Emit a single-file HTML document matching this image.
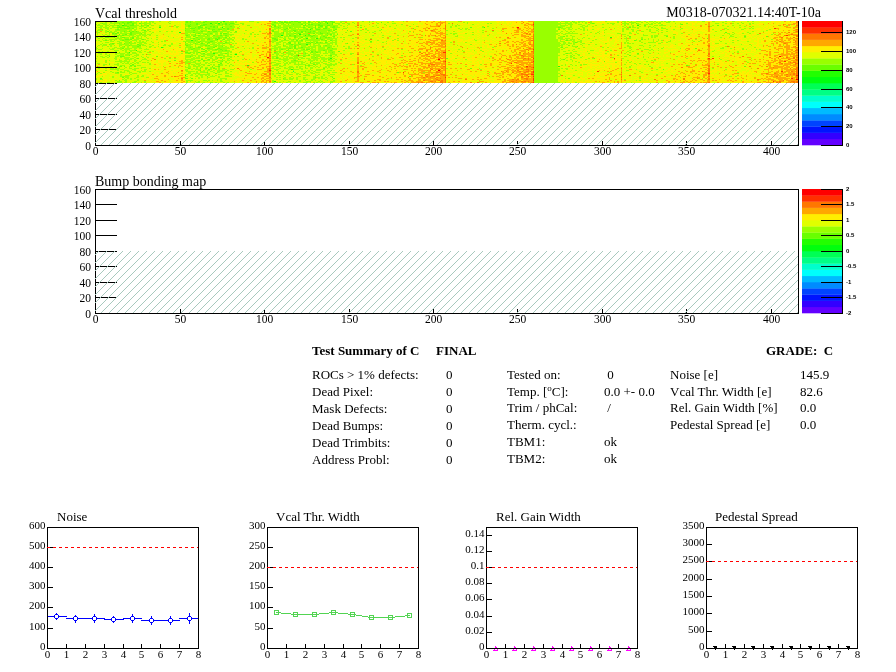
<!DOCTYPE html><html><head><meta charset="utf-8"><style>html,body{margin:0;padding:0;background:#fff;}body{width:896px;height:672px;overflow:hidden;position:relative;}svg{position:absolute;left:0;top:0;will-change:transform;}text{font-family:"Liberation Serif",serif;fill:#000;}.s{font-family:"Liberation Sans",sans-serif;}</style></head><body>
<svg width="896" height="672" viewBox="0 0 896 672" style="z-index:0">
<rect x="95" y="21" width="3" height="21" fill="#ccfb00"/>
<rect x="98" y="21" width="3" height="21" fill="#c0fc00"/>
<rect x="101" y="21" width="3" height="21" fill="#c3fb00"/>
<rect x="104" y="21" width="3" height="21" fill="#b0fe00"/>
<rect x="107" y="21" width="3" height="21" fill="#bcfe00"/>
<rect x="110" y="21" width="3" height="21" fill="#b7fe00"/>
<rect x="113" y="21" width="3" height="21" fill="#b2ff00"/>
<rect x="116" y="21" width="3" height="21" fill="#a5fe00"/>
<rect x="119" y="21" width="3" height="21" fill="#a1ff00"/>
<rect x="122" y="21" width="3" height="21" fill="#97ff00"/>
<rect x="125" y="21" width="3" height="21" fill="#98ff00"/>
<rect x="128" y="21" width="3" height="21" fill="#98ff00"/>
<rect x="131" y="21" width="3" height="21" fill="#95fe00"/>
<rect x="134" y="21" width="3" height="21" fill="#acfe00"/>
<rect x="137" y="21" width="3" height="21" fill="#bdff00"/>
<rect x="140" y="21" width="3" height="21" fill="#b6ff00"/>
<rect x="143" y="21" width="3" height="21" fill="#b4ff00"/>
<rect x="146" y="21" width="3" height="21" fill="#c0fe00"/>
<rect x="149" y="21" width="3" height="21" fill="#cafd00"/>
<rect x="152" y="21" width="3" height="21" fill="#dcfa00"/>
<rect x="155" y="21" width="3" height="21" fill="#dffb00"/>
<rect x="158" y="21" width="3" height="21" fill="#d7fb00"/>
<rect x="161" y="21" width="3" height="21" fill="#e6f900"/>
<rect x="164" y="21" width="3" height="21" fill="#e3f900"/>
<rect x="167" y="21" width="3" height="21" fill="#e0fa00"/>
<rect x="170" y="21" width="3" height="21" fill="#e6f600"/>
<rect x="173" y="21" width="3" height="21" fill="#e6f900"/>
<rect x="176" y="21" width="3" height="21" fill="#e3fa00"/>
<rect x="179" y="21" width="3" height="21" fill="#e9f300"/>
<rect x="182" y="21" width="3" height="21" fill="#eff000"/>
<rect x="185" y="21" width="3" height="21" fill="#99ff00"/>
<rect x="188" y="21" width="3" height="21" fill="#9cff00"/>
<rect x="191" y="21" width="3" height="21" fill="#9cff00"/>
<rect x="194" y="21" width="3" height="21" fill="#95ff00"/>
<rect x="197" y="21" width="3" height="21" fill="#99ff00"/>
<rect x="200" y="21" width="3" height="21" fill="#9aff00"/>
<rect x="203" y="21" width="3" height="21" fill="#a1ff00"/>
<rect x="206" y="21" width="3" height="21" fill="#9aff00"/>
<rect x="209" y="21" width="3" height="21" fill="#96ff00"/>
<rect x="212" y="21" width="3" height="21" fill="#98ff00"/>
<rect x="215" y="21" width="3" height="21" fill="#95fe00"/>
<rect x="218" y="21" width="3" height="21" fill="#a5fd00"/>
<rect x="221" y="21" width="3" height="21" fill="#9ffd00"/>
<rect x="224" y="21" width="3" height="21" fill="#97ff00"/>
<rect x="227" y="21" width="3" height="21" fill="#a2ff00"/>
<rect x="230" y="21" width="3" height="21" fill="#adfd00"/>
<rect x="233" y="21" width="3" height="21" fill="#c7fb00"/>
<rect x="236" y="21" width="3" height="21" fill="#dcf900"/>
<rect x="239" y="21" width="3" height="21" fill="#e2fb00"/>
<rect x="242" y="21" width="3" height="21" fill="#defa00"/>
<rect x="245" y="21" width="3" height="21" fill="#e4f800"/>
<rect x="248" y="21" width="3" height="21" fill="#defa00"/>
<rect x="251" y="21" width="3" height="21" fill="#e2f800"/>
<rect x="254" y="21" width="3" height="21" fill="#e4fa00"/>
<rect x="257" y="21" width="3" height="21" fill="#e6f900"/>
<rect x="260" y="21" width="3" height="21" fill="#f1f300"/>
<rect x="263" y="21" width="3" height="21" fill="#f7e800"/>
<rect x="266" y="21" width="3" height="21" fill="#fae200"/>
<rect x="269" y="21" width="3" height="21" fill="#e9c400"/>
<rect x="272" y="21" width="3" height="21" fill="#9eff00"/>
<rect x="275" y="21" width="3" height="21" fill="#a2fe00"/>
<rect x="278" y="21" width="3" height="21" fill="#acff00"/>
<rect x="281" y="21" width="3" height="21" fill="#a9fe00"/>
<rect x="284" y="21" width="3" height="21" fill="#a5ff00"/>
<rect x="287" y="21" width="3" height="21" fill="#a8ff00"/>
<rect x="290" y="21" width="3" height="21" fill="#a0ff00"/>
<rect x="293" y="21" width="3" height="21" fill="#97ff00"/>
<rect x="296" y="21" width="3" height="21" fill="#9dff00"/>
<rect x="299" y="21" width="3" height="21" fill="#9bff00"/>
<rect x="302" y="21" width="3" height="21" fill="#a5ff00"/>
<rect x="305" y="21" width="3" height="21" fill="#9bff00"/>
<rect x="308" y="21" width="3" height="21" fill="#9afc00"/>
<rect x="311" y="21" width="3" height="21" fill="#9fff00"/>
<rect x="314" y="21" width="3" height="21" fill="#a0ff00"/>
<rect x="317" y="21" width="3" height="21" fill="#9eff00"/>
<rect x="320" y="21" width="3" height="21" fill="#97ff00"/>
<rect x="323" y="21" width="3" height="21" fill="#9bff00"/>
<rect x="326" y="21" width="3" height="21" fill="#99ff00"/>
<rect x="329" y="21" width="3" height="21" fill="#a1ff00"/>
<rect x="332" y="21" width="3" height="21" fill="#a0ff00"/>
<rect x="335" y="21" width="3" height="21" fill="#b9ff00"/>
<rect x="338" y="21" width="3" height="21" fill="#dbfb00"/>
<rect x="341" y="21" width="3" height="21" fill="#d6fb00"/>
<rect x="344" y="21" width="3" height="21" fill="#dcf800"/>
<rect x="347" y="21" width="3" height="21" fill="#d9fc00"/>
<rect x="350" y="21" width="3" height="21" fill="#e2f700"/>
<rect x="353" y="21" width="3" height="21" fill="#e3f900"/>
<rect x="356" y="21" width="3" height="21" fill="#f5d900"/>
<rect x="359" y="21" width="3" height="21" fill="#defb00"/>
<rect x="362" y="21" width="3" height="21" fill="#e5f800"/>
<rect x="365" y="21" width="3" height="21" fill="#defa00"/>
<rect x="368" y="21" width="3" height="21" fill="#dff900"/>
<rect x="371" y="21" width="3" height="21" fill="#daf700"/>
<rect x="374" y="21" width="3" height="21" fill="#e3f900"/>
<rect x="377" y="21" width="3" height="21" fill="#dffb00"/>
<rect x="380" y="21" width="3" height="21" fill="#e1f900"/>
<rect x="383" y="21" width="3" height="21" fill="#e7f700"/>
<rect x="386" y="21" width="3" height="21" fill="#eaf200"/>
<rect x="389" y="21" width="3" height="21" fill="#e7f900"/>
<rect x="392" y="21" width="3" height="21" fill="#e3f700"/>
<rect x="395" y="21" width="3" height="21" fill="#e6f600"/>
<rect x="398" y="21" width="3" height="21" fill="#eaf700"/>
<rect x="401" y="21" width="3" height="21" fill="#e9f500"/>
<rect x="404" y="21" width="3" height="21" fill="#ecf600"/>
<rect x="407" y="21" width="3" height="21" fill="#f2ed00"/>
<rect x="410" y="21" width="3" height="21" fill="#f3ed00"/>
<rect x="413" y="21" width="3" height="21" fill="#eeee00"/>
<rect x="416" y="21" width="3" height="21" fill="#f2ee00"/>
<rect x="419" y="21" width="3" height="21" fill="#f6e300"/>
<rect x="422" y="21" width="3" height="21" fill="#f7ec00"/>
<rect x="425" y="21" width="3" height="21" fill="#fddc00"/>
<rect x="428" y="21" width="3" height="21" fill="#feda00"/>
<rect x="431" y="21" width="3" height="21" fill="#fdd600"/>
<rect x="434" y="21" width="3" height="21" fill="#fdce00"/>
<rect x="437" y="21" width="3" height="21" fill="#fdcf00"/>
<rect x="440" y="21" width="3" height="21" fill="#feca00"/>
<rect x="443" y="21" width="3" height="21" fill="#febf00"/>
<rect x="446" y="21" width="3" height="21" fill="#e0fc00"/>
<rect x="449" y="21" width="3" height="21" fill="#dcfd00"/>
<rect x="452" y="21" width="3" height="21" fill="#def700"/>
<rect x="455" y="21" width="3" height="21" fill="#dafc00"/>
<rect x="458" y="21" width="3" height="21" fill="#e6f600"/>
<rect x="461" y="21" width="3" height="21" fill="#e7f800"/>
<rect x="464" y="21" width="3" height="21" fill="#defc00"/>
<rect x="467" y="21" width="3" height="21" fill="#e4fa00"/>
<rect x="470" y="21" width="3" height="21" fill="#e1fa00"/>
<rect x="473" y="21" width="3" height="21" fill="#e5f900"/>
<rect x="476" y="21" width="3" height="21" fill="#eaf900"/>
<rect x="479" y="21" width="3" height="21" fill="#e4fd00"/>
<rect x="482" y="21" width="3" height="21" fill="#dbfb00"/>
<rect x="485" y="21" width="3" height="21" fill="#e9f600"/>
<rect x="488" y="21" width="3" height="21" fill="#e3fa00"/>
<rect x="491" y="21" width="3" height="21" fill="#e4f600"/>
<rect x="494" y="21" width="3" height="21" fill="#e9f800"/>
<rect x="497" y="21" width="3" height="21" fill="#f0f400"/>
<rect x="500" y="21" width="3" height="21" fill="#f1ed00"/>
<rect x="503" y="21" width="3" height="21" fill="#f5e800"/>
<rect x="506" y="21" width="3" height="21" fill="#f9e600"/>
<rect x="509" y="21" width="3" height="21" fill="#f9ee00"/>
<rect x="512" y="21" width="3" height="21" fill="#fde400"/>
<rect x="515" y="21" width="3" height="21" fill="#fdd700"/>
<rect x="518" y="21" width="3" height="21" fill="#fdde00"/>
<rect x="521" y="21" width="3" height="21" fill="#fed200"/>
<rect x="524" y="21" width="3" height="21" fill="#ffcf00"/>
<rect x="527" y="21" width="3" height="21" fill="#fec700"/>
<rect x="530" y="21" width="3" height="21" fill="#feca00"/>
<rect x="533" y="21" width="3" height="21" fill="#bbd400"/>
<rect x="536" y="21" width="3" height="21" fill="#99ff00"/>
<rect x="539" y="21" width="3" height="21" fill="#99ff00"/>
<rect x="542" y="21" width="3" height="21" fill="#99ff00"/>
<rect x="545" y="21" width="3" height="21" fill="#99ff00"/>
<rect x="548" y="21" width="3" height="21" fill="#99ff00"/>
<rect x="551" y="21" width="3" height="21" fill="#99ff00"/>
<rect x="554" y="21" width="3" height="21" fill="#a1ff00"/>
<rect x="557" y="21" width="3" height="21" fill="#b5fe00"/>
<rect x="560" y="21" width="3" height="21" fill="#b6fe00"/>
<rect x="563" y="21" width="3" height="21" fill="#befe00"/>
<rect x="566" y="21" width="3" height="21" fill="#bafe00"/>
<rect x="569" y="21" width="3" height="21" fill="#bbfe00"/>
<rect x="572" y="21" width="3" height="21" fill="#c2ff00"/>
<rect x="575" y="21" width="3" height="21" fill="#d4ff00"/>
<rect x="578" y="21" width="3" height="21" fill="#cdfd00"/>
<rect x="581" y="21" width="3" height="21" fill="#ccfd00"/>
<rect x="584" y="21" width="3" height="21" fill="#d4fd00"/>
<rect x="587" y="21" width="3" height="21" fill="#def800"/>
<rect x="590" y="21" width="3" height="21" fill="#d9fb00"/>
<rect x="593" y="21" width="3" height="21" fill="#dcfb00"/>
<rect x="596" y="21" width="3" height="21" fill="#e1fb00"/>
<rect x="599" y="21" width="3" height="21" fill="#e6fa00"/>
<rect x="602" y="21" width="3" height="21" fill="#e5f800"/>
<rect x="605" y="21" width="3" height="21" fill="#defd00"/>
<rect x="608" y="21" width="3" height="21" fill="#e2f800"/>
<rect x="611" y="21" width="3" height="21" fill="#e0f800"/>
<rect x="614" y="21" width="3" height="21" fill="#e6fa00"/>
<rect x="617" y="21" width="3" height="21" fill="#e1fa00"/>
<rect x="620" y="21" width="3" height="21" fill="#e3f000"/>
<rect x="623" y="21" width="3" height="21" fill="#c4fe00"/>
<rect x="626" y="21" width="3" height="21" fill="#cbf800"/>
<rect x="629" y="21" width="3" height="21" fill="#cafc00"/>
<rect x="632" y="21" width="3" height="21" fill="#d1fa00"/>
<rect x="635" y="21" width="3" height="21" fill="#cdfc00"/>
<rect x="638" y="21" width="3" height="21" fill="#cefa00"/>
<rect x="641" y="21" width="3" height="21" fill="#d2fe00"/>
<rect x="644" y="21" width="3" height="21" fill="#cefe00"/>
<rect x="647" y="21" width="3" height="21" fill="#d3fd00"/>
<rect x="650" y="21" width="3" height="21" fill="#cafd00"/>
<rect x="653" y="21" width="3" height="21" fill="#cbfd00"/>
<rect x="656" y="21" width="3" height="21" fill="#cbfd00"/>
<rect x="659" y="21" width="3" height="21" fill="#d7fb00"/>
<rect x="662" y="21" width="3" height="21" fill="#d6fb00"/>
<rect x="665" y="21" width="3" height="21" fill="#d5fc00"/>
<rect x="668" y="21" width="3" height="21" fill="#dbfa00"/>
<rect x="671" y="21" width="3" height="21" fill="#e0fb00"/>
<rect x="674" y="21" width="3" height="21" fill="#dffa00"/>
<rect x="677" y="21" width="3" height="21" fill="#e6fc00"/>
<rect x="680" y="21" width="3" height="21" fill="#ddf900"/>
<rect x="683" y="21" width="3" height="21" fill="#eef500"/>
<rect x="686" y="21" width="3" height="21" fill="#edf300"/>
<rect x="689" y="21" width="3" height="21" fill="#edf400"/>
<rect x="692" y="21" width="3" height="21" fill="#f1f300"/>
<rect x="695" y="21" width="3" height="21" fill="#edf400"/>
<rect x="698" y="21" width="3" height="21" fill="#edef00"/>
<rect x="701" y="21" width="3" height="21" fill="#f0ef00"/>
<rect x="704" y="21" width="3" height="21" fill="#f6ed00"/>
<rect x="707" y="21" width="3" height="21" fill="#f9c500"/>
<rect x="710" y="21" width="3" height="21" fill="#e6f900"/>
<rect x="713" y="21" width="3" height="21" fill="#dffb00"/>
<rect x="716" y="21" width="3" height="21" fill="#ddfc00"/>
<rect x="719" y="21" width="3" height="21" fill="#dffb00"/>
<rect x="722" y="21" width="3" height="21" fill="#ddf800"/>
<rect x="725" y="21" width="3" height="21" fill="#dbfa00"/>
<rect x="728" y="21" width="3" height="21" fill="#e2f800"/>
<rect x="731" y="21" width="3" height="21" fill="#d5fa00"/>
<rect x="734" y="21" width="3" height="21" fill="#e2fb00"/>
<rect x="737" y="21" width="3" height="21" fill="#e0fb00"/>
<rect x="740" y="21" width="3" height="21" fill="#e3f900"/>
<rect x="743" y="21" width="3" height="21" fill="#d9fa00"/>
<rect x="746" y="21" width="3" height="21" fill="#e2f900"/>
<rect x="749" y="21" width="3" height="21" fill="#def800"/>
<rect x="752" y="21" width="3" height="21" fill="#dffa00"/>
<rect x="755" y="21" width="3" height="21" fill="#eaf900"/>
<rect x="758" y="21" width="3" height="21" fill="#eff200"/>
<rect x="761" y="21" width="3" height="21" fill="#ecf500"/>
<rect x="764" y="21" width="3" height="21" fill="#eff100"/>
<rect x="767" y="21" width="3" height="21" fill="#eef300"/>
<rect x="770" y="21" width="3" height="21" fill="#eff100"/>
<rect x="773" y="21" width="3" height="21" fill="#f9db00"/>
<rect x="776" y="21" width="3" height="21" fill="#f8df00"/>
<rect x="779" y="21" width="3" height="21" fill="#f9d900"/>
<rect x="782" y="21" width="3" height="21" fill="#fbdb00"/>
<rect x="785" y="21" width="3" height="21" fill="#fad700"/>
<rect x="788" y="21" width="3" height="21" fill="#fccf00"/>
<rect x="791" y="21" width="3" height="21" fill="#fed700"/>
<rect x="794" y="21" width="3" height="21" fill="#fdba00"/>
<rect x="797" y="21" width="1" height="21" fill="#ff9f00"/>
<rect x="95" y="42" width="3" height="21" fill="#d5fd00"/>
<rect x="98" y="42" width="3" height="21" fill="#d5fd00"/>
<rect x="101" y="42" width="3" height="21" fill="#d1fd00"/>
<rect x="104" y="42" width="3" height="21" fill="#cbfd00"/>
<rect x="107" y="42" width="3" height="21" fill="#cffd00"/>
<rect x="110" y="42" width="3" height="21" fill="#d0fd00"/>
<rect x="113" y="42" width="3" height="21" fill="#cafe00"/>
<rect x="116" y="42" width="3" height="21" fill="#c6fe00"/>
<rect x="119" y="42" width="3" height="21" fill="#aeff00"/>
<rect x="122" y="42" width="3" height="21" fill="#b7ff00"/>
<rect x="125" y="42" width="3" height="21" fill="#a9ff00"/>
<rect x="128" y="42" width="3" height="21" fill="#aeff00"/>
<rect x="131" y="42" width="3" height="21" fill="#bffe00"/>
<rect x="134" y="42" width="3" height="21" fill="#afff00"/>
<rect x="137" y="42" width="3" height="21" fill="#bafe00"/>
<rect x="140" y="42" width="3" height="21" fill="#c4ff00"/>
<rect x="143" y="42" width="3" height="21" fill="#c9fe00"/>
<rect x="146" y="42" width="3" height="21" fill="#d0fb00"/>
<rect x="149" y="42" width="3" height="21" fill="#daf800"/>
<rect x="152" y="42" width="3" height="21" fill="#e7f300"/>
<rect x="155" y="42" width="3" height="21" fill="#e6f700"/>
<rect x="158" y="42" width="3" height="21" fill="#eef600"/>
<rect x="161" y="42" width="3" height="21" fill="#e6f400"/>
<rect x="164" y="42" width="3" height="21" fill="#e4f700"/>
<rect x="167" y="42" width="3" height="21" fill="#e7f400"/>
<rect x="170" y="42" width="3" height="21" fill="#e5f600"/>
<rect x="173" y="42" width="3" height="21" fill="#ecf200"/>
<rect x="176" y="42" width="3" height="21" fill="#f0f600"/>
<rect x="179" y="42" width="3" height="21" fill="#efea00"/>
<rect x="182" y="42" width="3" height="21" fill="#f4e900"/>
<rect x="185" y="42" width="3" height="21" fill="#a2ff00"/>
<rect x="188" y="42" width="3" height="21" fill="#a5ff00"/>
<rect x="191" y="42" width="3" height="21" fill="#aeff00"/>
<rect x="194" y="42" width="3" height="21" fill="#aeff00"/>
<rect x="197" y="42" width="3" height="21" fill="#adff00"/>
<rect x="200" y="42" width="3" height="21" fill="#b0fe00"/>
<rect x="203" y="42" width="3" height="21" fill="#b2fe00"/>
<rect x="206" y="42" width="3" height="21" fill="#aafe00"/>
<rect x="209" y="42" width="3" height="21" fill="#acff00"/>
<rect x="212" y="42" width="3" height="21" fill="#a6fe00"/>
<rect x="215" y="42" width="3" height="21" fill="#b4fe00"/>
<rect x="218" y="42" width="3" height="21" fill="#a5fe00"/>
<rect x="221" y="42" width="3" height="21" fill="#a5ff00"/>
<rect x="224" y="42" width="3" height="21" fill="#b2fe00"/>
<rect x="227" y="42" width="3" height="21" fill="#b4ff00"/>
<rect x="230" y="42" width="3" height="21" fill="#c8fb00"/>
<rect x="233" y="42" width="3" height="21" fill="#d8f900"/>
<rect x="236" y="42" width="3" height="21" fill="#e1f600"/>
<rect x="239" y="42" width="3" height="21" fill="#e8f900"/>
<rect x="242" y="42" width="3" height="21" fill="#e5f500"/>
<rect x="245" y="42" width="3" height="21" fill="#edf500"/>
<rect x="248" y="42" width="3" height="21" fill="#eff400"/>
<rect x="251" y="42" width="3" height="21" fill="#e7f400"/>
<rect x="254" y="42" width="3" height="21" fill="#f2f200"/>
<rect x="257" y="42" width="3" height="21" fill="#f6e800"/>
<rect x="260" y="42" width="3" height="21" fill="#fae300"/>
<rect x="263" y="42" width="3" height="21" fill="#fbdd00"/>
<rect x="266" y="42" width="3" height="21" fill="#fad400"/>
<rect x="269" y="42" width="3" height="21" fill="#eebc00"/>
<rect x="272" y="42" width="3" height="21" fill="#bffe00"/>
<rect x="275" y="42" width="3" height="21" fill="#aafe00"/>
<rect x="278" y="42" width="3" height="21" fill="#b5ff00"/>
<rect x="281" y="42" width="3" height="21" fill="#bdff00"/>
<rect x="284" y="42" width="3" height="21" fill="#b7fb00"/>
<rect x="287" y="42" width="3" height="21" fill="#abfe00"/>
<rect x="290" y="42" width="3" height="21" fill="#aaff00"/>
<rect x="293" y="42" width="3" height="21" fill="#a2ff00"/>
<rect x="296" y="42" width="3" height="21" fill="#affb00"/>
<rect x="299" y="42" width="3" height="21" fill="#b5fd00"/>
<rect x="302" y="42" width="3" height="21" fill="#aafd00"/>
<rect x="305" y="42" width="3" height="21" fill="#b2ff00"/>
<rect x="308" y="42" width="3" height="21" fill="#b0fe00"/>
<rect x="311" y="42" width="3" height="21" fill="#a6ff00"/>
<rect x="314" y="42" width="3" height="21" fill="#a6ff00"/>
<rect x="317" y="42" width="3" height="21" fill="#adfe00"/>
<rect x="320" y="42" width="3" height="21" fill="#b5ff00"/>
<rect x="323" y="42" width="3" height="21" fill="#b2fe00"/>
<rect x="326" y="42" width="3" height="21" fill="#b0ff00"/>
<rect x="329" y="42" width="3" height="21" fill="#9bff00"/>
<rect x="332" y="42" width="3" height="21" fill="#b5ff00"/>
<rect x="335" y="42" width="3" height="21" fill="#ccfe00"/>
<rect x="338" y="42" width="3" height="21" fill="#e2f800"/>
<rect x="341" y="42" width="3" height="21" fill="#eaf400"/>
<rect x="344" y="42" width="3" height="21" fill="#e8f300"/>
<rect x="347" y="42" width="3" height="21" fill="#e7f700"/>
<rect x="350" y="42" width="3" height="21" fill="#e8f500"/>
<rect x="353" y="42" width="3" height="21" fill="#f0f300"/>
<rect x="356" y="42" width="3" height="21" fill="#facc00"/>
<rect x="359" y="42" width="3" height="21" fill="#f0f300"/>
<rect x="362" y="42" width="3" height="21" fill="#f3f200"/>
<rect x="365" y="42" width="3" height="21" fill="#ecf700"/>
<rect x="368" y="42" width="3" height="21" fill="#edf300"/>
<rect x="371" y="42" width="3" height="21" fill="#ebef00"/>
<rect x="374" y="42" width="3" height="21" fill="#f3f200"/>
<rect x="377" y="42" width="3" height="21" fill="#f1f200"/>
<rect x="380" y="42" width="3" height="21" fill="#eef100"/>
<rect x="383" y="42" width="3" height="21" fill="#f0f300"/>
<rect x="386" y="42" width="3" height="21" fill="#f0f200"/>
<rect x="389" y="42" width="3" height="21" fill="#f6f000"/>
<rect x="392" y="42" width="3" height="21" fill="#f7ee00"/>
<rect x="395" y="42" width="3" height="21" fill="#f7ef00"/>
<rect x="398" y="42" width="3" height="21" fill="#f7ee00"/>
<rect x="401" y="42" width="3" height="21" fill="#ede800"/>
<rect x="404" y="42" width="3" height="21" fill="#f6eb00"/>
<rect x="407" y="42" width="3" height="21" fill="#f7ea00"/>
<rect x="410" y="42" width="3" height="21" fill="#fbe200"/>
<rect x="413" y="42" width="3" height="21" fill="#fbe700"/>
<rect x="416" y="42" width="3" height="21" fill="#fce200"/>
<rect x="419" y="42" width="3" height="21" fill="#f8d200"/>
<rect x="422" y="42" width="3" height="21" fill="#fed200"/>
<rect x="425" y="42" width="3" height="21" fill="#ffc500"/>
<rect x="428" y="42" width="3" height="21" fill="#fbca00"/>
<rect x="431" y="42" width="3" height="21" fill="#ffca00"/>
<rect x="434" y="42" width="3" height="21" fill="#fec900"/>
<rect x="437" y="42" width="3" height="21" fill="#ffb500"/>
<rect x="440" y="42" width="3" height="21" fill="#ffb900"/>
<rect x="443" y="42" width="3" height="21" fill="#ff9c00"/>
<rect x="446" y="42" width="3" height="21" fill="#ebf400"/>
<rect x="449" y="42" width="3" height="21" fill="#eaf500"/>
<rect x="452" y="42" width="3" height="21" fill="#eef300"/>
<rect x="455" y="42" width="3" height="21" fill="#eaf600"/>
<rect x="458" y="42" width="3" height="21" fill="#ecf600"/>
<rect x="461" y="42" width="3" height="21" fill="#eaf300"/>
<rect x="464" y="42" width="3" height="21" fill="#eaf400"/>
<rect x="467" y="42" width="3" height="21" fill="#f2f400"/>
<rect x="470" y="42" width="3" height="21" fill="#eef600"/>
<rect x="473" y="42" width="3" height="21" fill="#f2f300"/>
<rect x="476" y="42" width="3" height="21" fill="#f4f100"/>
<rect x="479" y="42" width="3" height="21" fill="#e9f500"/>
<rect x="482" y="42" width="3" height="21" fill="#eff300"/>
<rect x="485" y="42" width="3" height="21" fill="#eff700"/>
<rect x="488" y="42" width="3" height="21" fill="#ecf500"/>
<rect x="491" y="42" width="3" height="21" fill="#f0ea00"/>
<rect x="494" y="42" width="3" height="21" fill="#f4e900"/>
<rect x="497" y="42" width="3" height="21" fill="#f8e800"/>
<rect x="500" y="42" width="3" height="21" fill="#fadf00"/>
<rect x="503" y="42" width="3" height="21" fill="#f9e600"/>
<rect x="506" y="42" width="3" height="21" fill="#fbdd00"/>
<rect x="509" y="42" width="3" height="21" fill="#fdd500"/>
<rect x="512" y="42" width="3" height="21" fill="#fed400"/>
<rect x="515" y="42" width="3" height="21" fill="#fec900"/>
<rect x="518" y="42" width="3" height="21" fill="#fcc600"/>
<rect x="521" y="42" width="3" height="21" fill="#ffbc00"/>
<rect x="524" y="42" width="3" height="21" fill="#ffbd00"/>
<rect x="527" y="42" width="3" height="21" fill="#ffba00"/>
<rect x="530" y="42" width="3" height="21" fill="#ffb400"/>
<rect x="533" y="42" width="3" height="21" fill="#bbcf00"/>
<rect x="536" y="42" width="3" height="21" fill="#99ff00"/>
<rect x="539" y="42" width="3" height="21" fill="#99ff00"/>
<rect x="542" y="42" width="3" height="21" fill="#99ff00"/>
<rect x="545" y="42" width="3" height="21" fill="#99ff00"/>
<rect x="548" y="42" width="3" height="21" fill="#99ff00"/>
<rect x="551" y="42" width="3" height="21" fill="#99ff00"/>
<rect x="554" y="42" width="3" height="21" fill="#99ff00"/>
<rect x="557" y="42" width="3" height="21" fill="#b2fe00"/>
<rect x="560" y="42" width="3" height="21" fill="#ccff00"/>
<rect x="563" y="42" width="3" height="21" fill="#cafe00"/>
<rect x="566" y="42" width="3" height="21" fill="#d0fc00"/>
<rect x="569" y="42" width="3" height="21" fill="#ccfe00"/>
<rect x="572" y="42" width="3" height="21" fill="#c9fc00"/>
<rect x="575" y="42" width="3" height="21" fill="#d2fb00"/>
<rect x="578" y="42" width="3" height="21" fill="#dafc00"/>
<rect x="581" y="42" width="3" height="21" fill="#e1fa00"/>
<rect x="584" y="42" width="3" height="21" fill="#eaf700"/>
<rect x="587" y="42" width="3" height="21" fill="#dffb00"/>
<rect x="590" y="42" width="3" height="21" fill="#e3f800"/>
<rect x="593" y="42" width="3" height="21" fill="#e5f800"/>
<rect x="596" y="42" width="3" height="21" fill="#ecf600"/>
<rect x="599" y="42" width="3" height="21" fill="#f2f200"/>
<rect x="602" y="42" width="3" height="21" fill="#edf600"/>
<rect x="605" y="42" width="3" height="21" fill="#e9f400"/>
<rect x="608" y="42" width="3" height="21" fill="#ecf300"/>
<rect x="611" y="42" width="3" height="21" fill="#ebf400"/>
<rect x="614" y="42" width="3" height="21" fill="#f3eb00"/>
<rect x="617" y="42" width="3" height="21" fill="#f0f100"/>
<rect x="620" y="42" width="3" height="21" fill="#f2e000"/>
<rect x="623" y="42" width="3" height="21" fill="#d8fc00"/>
<rect x="626" y="42" width="3" height="21" fill="#d2fc00"/>
<rect x="629" y="42" width="3" height="21" fill="#d0fb00"/>
<rect x="632" y="42" width="3" height="21" fill="#e2fb00"/>
<rect x="635" y="42" width="3" height="21" fill="#e0fa00"/>
<rect x="638" y="42" width="3" height="21" fill="#e1f800"/>
<rect x="641" y="42" width="3" height="21" fill="#dbfa00"/>
<rect x="644" y="42" width="3" height="21" fill="#ddfb00"/>
<rect x="647" y="42" width="3" height="21" fill="#d9fc00"/>
<rect x="650" y="42" width="3" height="21" fill="#dbf900"/>
<rect x="653" y="42" width="3" height="21" fill="#dcf600"/>
<rect x="656" y="42" width="3" height="21" fill="#e7f700"/>
<rect x="659" y="42" width="3" height="21" fill="#e2fb00"/>
<rect x="662" y="42" width="3" height="21" fill="#e6fa00"/>
<rect x="665" y="42" width="3" height="21" fill="#e9f900"/>
<rect x="668" y="42" width="3" height="21" fill="#e9f700"/>
<rect x="671" y="42" width="3" height="21" fill="#edf500"/>
<rect x="674" y="42" width="3" height="21" fill="#eaf600"/>
<rect x="677" y="42" width="3" height="21" fill="#ecf600"/>
<rect x="680" y="42" width="3" height="21" fill="#eff200"/>
<rect x="683" y="42" width="3" height="21" fill="#f0f000"/>
<rect x="686" y="42" width="3" height="21" fill="#f3e900"/>
<rect x="689" y="42" width="3" height="21" fill="#f5ec00"/>
<rect x="692" y="42" width="3" height="21" fill="#f3ed00"/>
<rect x="695" y="42" width="3" height="21" fill="#f3ef00"/>
<rect x="698" y="42" width="3" height="21" fill="#fbe400"/>
<rect x="701" y="42" width="3" height="21" fill="#fce700"/>
<rect x="704" y="42" width="3" height="21" fill="#fde900"/>
<rect x="707" y="42" width="3" height="21" fill="#fdb100"/>
<rect x="710" y="42" width="3" height="21" fill="#ebf300"/>
<rect x="713" y="42" width="3" height="21" fill="#e9f300"/>
<rect x="716" y="42" width="3" height="21" fill="#e4fb00"/>
<rect x="719" y="42" width="3" height="21" fill="#e9f600"/>
<rect x="722" y="42" width="3" height="21" fill="#e5fa00"/>
<rect x="725" y="42" width="3" height="21" fill="#e9f300"/>
<rect x="728" y="42" width="3" height="21" fill="#edf100"/>
<rect x="731" y="42" width="3" height="21" fill="#eaf300"/>
<rect x="734" y="42" width="3" height="21" fill="#eff100"/>
<rect x="737" y="42" width="3" height="21" fill="#ecf300"/>
<rect x="740" y="42" width="3" height="21" fill="#ecf400"/>
<rect x="743" y="42" width="3" height="21" fill="#ecf300"/>
<rect x="746" y="42" width="3" height="21" fill="#e5f600"/>
<rect x="749" y="42" width="3" height="21" fill="#e9f200"/>
<rect x="752" y="42" width="3" height="21" fill="#edf600"/>
<rect x="755" y="42" width="3" height="21" fill="#eff300"/>
<rect x="758" y="42" width="3" height="21" fill="#f1ee00"/>
<rect x="761" y="42" width="3" height="21" fill="#f9e800"/>
<rect x="764" y="42" width="3" height="21" fill="#f7e600"/>
<rect x="767" y="42" width="3" height="21" fill="#f9dd00"/>
<rect x="770" y="42" width="3" height="21" fill="#fcdc00"/>
<rect x="773" y="42" width="3" height="21" fill="#fbd700"/>
<rect x="776" y="42" width="3" height="21" fill="#fed400"/>
<rect x="779" y="42" width="3" height="21" fill="#fec600"/>
<rect x="782" y="42" width="3" height="21" fill="#fdc800"/>
<rect x="785" y="42" width="3" height="21" fill="#ffb700"/>
<rect x="788" y="42" width="3" height="21" fill="#ffc100"/>
<rect x="791" y="42" width="3" height="21" fill="#ffc500"/>
<rect x="794" y="42" width="3" height="21" fill="#ffaa00"/>
<rect x="797" y="42" width="1" height="21" fill="#ff9800"/>
<rect x="95" y="63" width="3" height="20" fill="#daf800"/>
<rect x="98" y="63" width="3" height="20" fill="#dbf700"/>
<rect x="101" y="63" width="3" height="20" fill="#defa00"/>
<rect x="104" y="63" width="3" height="20" fill="#e0f800"/>
<rect x="107" y="63" width="3" height="20" fill="#defc00"/>
<rect x="110" y="63" width="3" height="20" fill="#d5fd00"/>
<rect x="113" y="63" width="3" height="20" fill="#d1fd00"/>
<rect x="116" y="63" width="3" height="20" fill="#bffe00"/>
<rect x="119" y="63" width="3" height="20" fill="#c2fd00"/>
<rect x="122" y="63" width="3" height="20" fill="#c2fe00"/>
<rect x="125" y="63" width="3" height="20" fill="#c2fe00"/>
<rect x="128" y="63" width="3" height="20" fill="#c5fe00"/>
<rect x="131" y="63" width="3" height="20" fill="#c8ff00"/>
<rect x="134" y="63" width="3" height="20" fill="#c5fd00"/>
<rect x="137" y="63" width="3" height="20" fill="#c9fe00"/>
<rect x="140" y="63" width="3" height="20" fill="#d7fc00"/>
<rect x="143" y="63" width="3" height="20" fill="#d5f800"/>
<rect x="146" y="63" width="3" height="20" fill="#e4fa00"/>
<rect x="149" y="63" width="3" height="20" fill="#e5f700"/>
<rect x="152" y="63" width="3" height="20" fill="#eff100"/>
<rect x="155" y="63" width="3" height="20" fill="#f6e800"/>
<rect x="158" y="63" width="3" height="20" fill="#f4ee00"/>
<rect x="161" y="63" width="3" height="20" fill="#f4ef00"/>
<rect x="164" y="63" width="3" height="20" fill="#f8e500"/>
<rect x="167" y="63" width="3" height="20" fill="#f7eb00"/>
<rect x="170" y="63" width="3" height="20" fill="#f5ef00"/>
<rect x="173" y="63" width="3" height="20" fill="#f7ec00"/>
<rect x="176" y="63" width="3" height="20" fill="#fae400"/>
<rect x="179" y="63" width="3" height="20" fill="#fbda00"/>
<rect x="182" y="63" width="3" height="20" fill="#fcdc00"/>
<rect x="185" y="63" width="3" height="20" fill="#b6fe00"/>
<rect x="188" y="63" width="3" height="20" fill="#c1fa00"/>
<rect x="191" y="63" width="3" height="20" fill="#c7ff00"/>
<rect x="194" y="63" width="3" height="20" fill="#c2fe00"/>
<rect x="197" y="63" width="3" height="20" fill="#b7fe00"/>
<rect x="200" y="63" width="3" height="20" fill="#c0fe00"/>
<rect x="203" y="63" width="3" height="20" fill="#c3ff00"/>
<rect x="206" y="63" width="3" height="20" fill="#bbfe00"/>
<rect x="209" y="63" width="3" height="20" fill="#c4fe00"/>
<rect x="212" y="63" width="3" height="20" fill="#c5ff00"/>
<rect x="215" y="63" width="3" height="20" fill="#cdfd00"/>
<rect x="218" y="63" width="3" height="20" fill="#b4ff00"/>
<rect x="221" y="63" width="3" height="20" fill="#c6fd00"/>
<rect x="224" y="63" width="3" height="20" fill="#c8fd00"/>
<rect x="227" y="63" width="3" height="20" fill="#d1fe00"/>
<rect x="230" y="63" width="3" height="20" fill="#d8fc00"/>
<rect x="233" y="63" width="3" height="20" fill="#e7f800"/>
<rect x="236" y="63" width="3" height="20" fill="#f0f200"/>
<rect x="239" y="63" width="3" height="20" fill="#f5f000"/>
<rect x="242" y="63" width="3" height="20" fill="#f4f000"/>
<rect x="245" y="63" width="3" height="20" fill="#f3e700"/>
<rect x="248" y="63" width="3" height="20" fill="#efe700"/>
<rect x="251" y="63" width="3" height="20" fill="#f5eb00"/>
<rect x="254" y="63" width="3" height="20" fill="#f5e900"/>
<rect x="257" y="63" width="3" height="20" fill="#fae700"/>
<rect x="260" y="63" width="3" height="20" fill="#fdd800"/>
<rect x="263" y="63" width="3" height="20" fill="#fcd300"/>
<rect x="266" y="63" width="3" height="20" fill="#fec900"/>
<rect x="269" y="63" width="3" height="20" fill="#f3b100"/>
<rect x="272" y="63" width="3" height="20" fill="#c4fe00"/>
<rect x="275" y="63" width="3" height="20" fill="#c2fd00"/>
<rect x="278" y="63" width="3" height="20" fill="#c2fe00"/>
<rect x="281" y="63" width="3" height="20" fill="#d2fd00"/>
<rect x="284" y="63" width="3" height="20" fill="#c3ff00"/>
<rect x="287" y="63" width="3" height="20" fill="#c7fe00"/>
<rect x="290" y="63" width="3" height="20" fill="#c0fe00"/>
<rect x="293" y="63" width="3" height="20" fill="#cefc01"/>
<rect x="296" y="63" width="3" height="20" fill="#c4ff00"/>
<rect x="299" y="63" width="3" height="20" fill="#c8fe00"/>
<rect x="302" y="63" width="3" height="20" fill="#c5fe00"/>
<rect x="305" y="63" width="3" height="20" fill="#bcfd00"/>
<rect x="308" y="63" width="3" height="20" fill="#c6fe00"/>
<rect x="311" y="63" width="3" height="20" fill="#c0fe00"/>
<rect x="314" y="63" width="3" height="20" fill="#bdfe00"/>
<rect x="317" y="63" width="3" height="20" fill="#c1fe00"/>
<rect x="320" y="63" width="3" height="20" fill="#d0fd00"/>
<rect x="323" y="63" width="3" height="20" fill="#c3fe00"/>
<rect x="326" y="63" width="3" height="20" fill="#c7fe00"/>
<rect x="329" y="63" width="3" height="20" fill="#c4fe00"/>
<rect x="332" y="63" width="3" height="20" fill="#c3fe00"/>
<rect x="335" y="63" width="3" height="20" fill="#e1fb00"/>
<rect x="338" y="63" width="3" height="20" fill="#f0f100"/>
<rect x="341" y="63" width="3" height="20" fill="#f0ee00"/>
<rect x="344" y="63" width="3" height="20" fill="#f6ee00"/>
<rect x="347" y="63" width="3" height="20" fill="#f5f100"/>
<rect x="350" y="63" width="3" height="20" fill="#f4ed00"/>
<rect x="353" y="63" width="3" height="20" fill="#f6eb00"/>
<rect x="356" y="63" width="3" height="20" fill="#fbbd00"/>
<rect x="359" y="63" width="3" height="20" fill="#f2ea00"/>
<rect x="362" y="63" width="3" height="20" fill="#f4e200"/>
<rect x="365" y="63" width="3" height="20" fill="#f6e800"/>
<rect x="368" y="63" width="3" height="20" fill="#f8eb00"/>
<rect x="371" y="63" width="3" height="20" fill="#f6eb00"/>
<rect x="374" y="63" width="3" height="20" fill="#fae900"/>
<rect x="377" y="63" width="3" height="20" fill="#f8e500"/>
<rect x="380" y="63" width="3" height="20" fill="#f8e800"/>
<rect x="383" y="63" width="3" height="20" fill="#f7ef00"/>
<rect x="386" y="63" width="3" height="20" fill="#f8e700"/>
<rect x="389" y="63" width="3" height="20" fill="#f9e600"/>
<rect x="392" y="63" width="3" height="20" fill="#fbe800"/>
<rect x="395" y="63" width="3" height="20" fill="#f8e000"/>
<rect x="398" y="63" width="3" height="20" fill="#f7e600"/>
<rect x="401" y="63" width="3" height="20" fill="#fbe000"/>
<rect x="404" y="63" width="3" height="20" fill="#f8dc00"/>
<rect x="407" y="63" width="3" height="20" fill="#f7dc00"/>
<rect x="410" y="63" width="3" height="20" fill="#fbd100"/>
<rect x="413" y="63" width="3" height="20" fill="#ffd200"/>
<rect x="416" y="63" width="3" height="20" fill="#fdd200"/>
<rect x="419" y="63" width="3" height="20" fill="#fec300"/>
<rect x="422" y="63" width="3" height="20" fill="#fcbe00"/>
<rect x="425" y="63" width="3" height="20" fill="#febf00"/>
<rect x="428" y="63" width="3" height="20" fill="#ffad00"/>
<rect x="431" y="63" width="3" height="20" fill="#ffb100"/>
<rect x="434" y="63" width="3" height="20" fill="#ffae00"/>
<rect x="437" y="63" width="3" height="20" fill="#ffa800"/>
<rect x="440" y="63" width="3" height="20" fill="#ffa000"/>
<rect x="443" y="63" width="3" height="20" fill="#ff9a00"/>
<rect x="446" y="63" width="3" height="20" fill="#eef000"/>
<rect x="449" y="63" width="3" height="20" fill="#f7e800"/>
<rect x="452" y="63" width="3" height="20" fill="#f6ee00"/>
<rect x="455" y="63" width="3" height="20" fill="#f3eb00"/>
<rect x="458" y="63" width="3" height="20" fill="#f1ee00"/>
<rect x="461" y="63" width="3" height="20" fill="#f5ef00"/>
<rect x="464" y="63" width="3" height="20" fill="#f5ea00"/>
<rect x="467" y="63" width="3" height="20" fill="#f7ef00"/>
<rect x="470" y="63" width="3" height="20" fill="#f4e900"/>
<rect x="473" y="63" width="3" height="20" fill="#f7ef00"/>
<rect x="476" y="63" width="3" height="20" fill="#f8e600"/>
<rect x="479" y="63" width="3" height="20" fill="#ebec00"/>
<rect x="482" y="63" width="3" height="20" fill="#f5ef00"/>
<rect x="485" y="63" width="3" height="20" fill="#f7e600"/>
<rect x="488" y="63" width="3" height="20" fill="#f4ea00"/>
<rect x="491" y="63" width="3" height="20" fill="#f4ec00"/>
<rect x="494" y="63" width="3" height="20" fill="#fce700"/>
<rect x="497" y="63" width="3" height="20" fill="#fade00"/>
<rect x="500" y="63" width="3" height="20" fill="#fcd900"/>
<rect x="503" y="63" width="3" height="20" fill="#fed300"/>
<rect x="506" y="63" width="3" height="20" fill="#ffcc00"/>
<rect x="509" y="63" width="3" height="20" fill="#fcc900"/>
<rect x="512" y="63" width="3" height="20" fill="#ffc500"/>
<rect x="515" y="63" width="3" height="20" fill="#ffb600"/>
<rect x="518" y="63" width="3" height="20" fill="#ffba00"/>
<rect x="521" y="63" width="3" height="20" fill="#ffa800"/>
<rect x="524" y="63" width="3" height="20" fill="#ffa600"/>
<rect x="527" y="63" width="3" height="20" fill="#ffa200"/>
<rect x="530" y="63" width="3" height="20" fill="#ffa100"/>
<rect x="533" y="63" width="3" height="20" fill="#bbc700"/>
<rect x="536" y="63" width="3" height="20" fill="#99ff00"/>
<rect x="539" y="63" width="3" height="20" fill="#99ff00"/>
<rect x="542" y="63" width="3" height="20" fill="#99ff00"/>
<rect x="545" y="63" width="3" height="20" fill="#99ff00"/>
<rect x="548" y="63" width="3" height="20" fill="#99ff00"/>
<rect x="551" y="63" width="3" height="20" fill="#99ff00"/>
<rect x="554" y="63" width="3" height="20" fill="#99ff00"/>
<rect x="557" y="63" width="3" height="20" fill="#b5fe00"/>
<rect x="560" y="63" width="3" height="20" fill="#dff800"/>
<rect x="563" y="63" width="3" height="20" fill="#dcfc00"/>
<rect x="566" y="63" width="3" height="20" fill="#e4f800"/>
<rect x="569" y="63" width="3" height="20" fill="#e4f900"/>
<rect x="572" y="63" width="3" height="20" fill="#e6f900"/>
<rect x="575" y="63" width="3" height="20" fill="#e1fb00"/>
<rect x="578" y="63" width="3" height="20" fill="#e6f800"/>
<rect x="581" y="63" width="3" height="20" fill="#ecf500"/>
<rect x="584" y="63" width="3" height="20" fill="#e8f900"/>
<rect x="587" y="63" width="3" height="20" fill="#f0f400"/>
<rect x="590" y="63" width="3" height="20" fill="#f6f200"/>
<rect x="593" y="63" width="3" height="20" fill="#f2f100"/>
<rect x="596" y="63" width="3" height="20" fill="#f5ec00"/>
<rect x="599" y="63" width="3" height="20" fill="#f7f000"/>
<rect x="602" y="63" width="3" height="20" fill="#f7ee00"/>
<rect x="605" y="63" width="3" height="20" fill="#f8e900"/>
<rect x="608" y="63" width="3" height="20" fill="#f5e600"/>
<rect x="611" y="63" width="3" height="20" fill="#f8eb00"/>
<rect x="614" y="63" width="3" height="20" fill="#f9e700"/>
<rect x="617" y="63" width="3" height="20" fill="#f7ea00"/>
<rect x="620" y="63" width="3" height="20" fill="#f4d700"/>
<rect x="623" y="63" width="3" height="20" fill="#e6f700"/>
<rect x="626" y="63" width="3" height="20" fill="#e9f700"/>
<rect x="629" y="63" width="3" height="20" fill="#e7f000"/>
<rect x="632" y="63" width="3" height="20" fill="#e8f900"/>
<rect x="635" y="63" width="3" height="20" fill="#e8f700"/>
<rect x="638" y="63" width="3" height="20" fill="#e4f400"/>
<rect x="641" y="63" width="3" height="20" fill="#e8f900"/>
<rect x="644" y="63" width="3" height="20" fill="#edf500"/>
<rect x="647" y="63" width="3" height="20" fill="#e7f800"/>
<rect x="650" y="63" width="3" height="20" fill="#e6f600"/>
<rect x="653" y="63" width="3" height="20" fill="#edf400"/>
<rect x="656" y="63" width="3" height="20" fill="#eaf000"/>
<rect x="659" y="63" width="3" height="20" fill="#e7f800"/>
<rect x="662" y="63" width="3" height="20" fill="#ebf500"/>
<rect x="665" y="63" width="3" height="20" fill="#ecf400"/>
<rect x="668" y="63" width="3" height="20" fill="#f2f000"/>
<rect x="671" y="63" width="3" height="20" fill="#f4ec00"/>
<rect x="674" y="63" width="3" height="20" fill="#f6e700"/>
<rect x="677" y="63" width="3" height="20" fill="#f8e800"/>
<rect x="680" y="63" width="3" height="20" fill="#fbe100"/>
<rect x="683" y="63" width="3" height="20" fill="#f8da00"/>
<rect x="686" y="63" width="3" height="20" fill="#f4e600"/>
<rect x="689" y="63" width="3" height="20" fill="#fae000"/>
<rect x="692" y="63" width="3" height="20" fill="#fbda00"/>
<rect x="695" y="63" width="3" height="20" fill="#fce000"/>
<rect x="698" y="63" width="3" height="20" fill="#fae400"/>
<rect x="701" y="63" width="3" height="20" fill="#f9dd00"/>
<rect x="704" y="63" width="3" height="20" fill="#fccd00"/>
<rect x="707" y="63" width="3" height="20" fill="#ff9900"/>
<rect x="710" y="63" width="3" height="20" fill="#eef300"/>
<rect x="713" y="63" width="3" height="20" fill="#f2ef00"/>
<rect x="716" y="63" width="3" height="20" fill="#f1ef00"/>
<rect x="719" y="63" width="3" height="20" fill="#faec00"/>
<rect x="722" y="63" width="3" height="20" fill="#f5f100"/>
<rect x="725" y="63" width="3" height="20" fill="#eeef00"/>
<rect x="728" y="63" width="3" height="20" fill="#f8ea00"/>
<rect x="731" y="63" width="3" height="20" fill="#f7e300"/>
<rect x="734" y="63" width="3" height="20" fill="#f2e900"/>
<rect x="737" y="63" width="3" height="20" fill="#f0ef00"/>
<rect x="740" y="63" width="3" height="20" fill="#f5ec00"/>
<rect x="743" y="63" width="3" height="20" fill="#f1ef00"/>
<rect x="746" y="63" width="3" height="20" fill="#f7ee00"/>
<rect x="749" y="63" width="3" height="20" fill="#f7ea00"/>
<rect x="752" y="63" width="3" height="20" fill="#f6ec00"/>
<rect x="755" y="63" width="3" height="20" fill="#f7e500"/>
<rect x="758" y="63" width="3" height="20" fill="#f6e600"/>
<rect x="761" y="63" width="3" height="20" fill="#fddf00"/>
<rect x="764" y="63" width="3" height="20" fill="#fadb00"/>
<rect x="767" y="63" width="3" height="20" fill="#fcc400"/>
<rect x="770" y="63" width="3" height="20" fill="#fec800"/>
<rect x="773" y="63" width="3" height="20" fill="#fec200"/>
<rect x="776" y="63" width="3" height="20" fill="#feb900"/>
<rect x="779" y="63" width="3" height="20" fill="#ffb500"/>
<rect x="782" y="63" width="3" height="20" fill="#ffbc00"/>
<rect x="785" y="63" width="3" height="20" fill="#ffb600"/>
<rect x="788" y="63" width="3" height="20" fill="#ffb500"/>
<rect x="791" y="63" width="3" height="20" fill="#ffa700"/>
<rect x="794" y="63" width="3" height="20" fill="#ff9a00"/>
<rect x="797" y="63" width="1" height="20" fill="#ff7700"/>
</svg>
<canvas id="hc" width="703" height="62" style="position:absolute;left:95px;top:21px;z-index:1"></canvas>
<svg width="896" height="672" viewBox="0 0 896 672" style="z-index:2">
<defs><pattern id="h" x="0" y="0" width="8" height="8" patternUnits="userSpaceOnUse">
<path d="M0 5h1v1h-1zM1 4h1v1h-1zM2 3h1v1h-1zM3 2h1v1h-1zM4 1h1v1h-1zM5 0h1v1h-1zM6 7h1v1h-1zM7 6h1v1h-1z" fill="#a8c9be"/></pattern></defs>
<rect x="95" y="145" width="704" height="1" fill="#000"/>
<rect x="95" y="21" width="1" height="125" fill="#000"/>
<rect x="798" y="21" width="1" height="125" fill="#000"/>
<text x="91" y="149.6" font-size="11.5" text-anchor="end">0</text>
<rect x="95" y="129" width="22" height="1" fill="#000"/>
<text x="91" y="133.6" font-size="11.5" text-anchor="end">20</text>
<rect x="95" y="114" width="22" height="1" fill="#000"/>
<text x="91" y="118.6" font-size="11.5" text-anchor="end">40</text>
<rect x="95" y="98" width="22" height="1" fill="#000"/>
<text x="91" y="102.6" font-size="11.5" text-anchor="end">60</text>
<rect x="95" y="83" width="22" height="1" fill="#000"/>
<text x="91" y="87.6" font-size="11.5" text-anchor="end">80</text>
<rect x="95" y="67" width="22" height="1" fill="#000"/>
<text x="91" y="71.6" font-size="11.5" text-anchor="end">100</text>
<rect x="95" y="52" width="22" height="1" fill="#000"/>
<text x="91" y="56.6" font-size="11.5" text-anchor="end">120</text>
<rect x="95" y="36" width="22" height="1" fill="#000"/>
<text x="91" y="40.6" font-size="11.5" text-anchor="end">140</text>
<rect x="95" y="21" width="22" height="1" fill="#000"/>
<text x="91" y="25.6" font-size="11.5" text-anchor="end">160</text>
<rect x="180" y="141" width="1" height="4" fill="#000"/>
<rect x="264" y="141" width="1" height="4" fill="#000"/>
<rect x="349" y="141" width="1" height="4" fill="#000"/>
<rect x="433" y="141" width="1" height="4" fill="#000"/>
<rect x="517" y="141" width="1" height="4" fill="#000"/>
<rect x="602" y="141" width="1" height="4" fill="#000"/>
<rect x="686" y="141" width="1" height="4" fill="#000"/>
<rect x="771" y="141" width="1" height="4" fill="#000"/>
<text x="95.5" y="155" font-size="11.5" text-anchor="middle">0</text>
<text x="180.5" y="155" font-size="11.5" text-anchor="middle">50</text>
<text x="264.5" y="155" font-size="11.5" text-anchor="middle">100</text>
<text x="349.5" y="155" font-size="11.5" text-anchor="middle">150</text>
<text x="433.5" y="155" font-size="11.5" text-anchor="middle">200</text>
<text x="517.5" y="155" font-size="11.5" text-anchor="middle">250</text>
<text x="602.5" y="155" font-size="11.5" text-anchor="middle">300</text>
<text x="686.5" y="155" font-size="11.5" text-anchor="middle">350</text>
<text x="771.5" y="155" font-size="11.5" text-anchor="middle">400</text>
<text x="95" y="18" font-size="14">Vcal threshold</text>
<rect x="95" y="83" width="703" height="62" fill="url(#h)"/>
<rect x="802" y="138.80" width="40" height="6.50" fill="#6300ff"/>
<rect x="802" y="132.60" width="40" height="6.50" fill="#3300ff"/>
<rect x="802" y="126.40" width="40" height="6.50" fill="#0014ff"/>
<rect x="802" y="120.20" width="40" height="6.50" fill="#0044ff"/>
<rect x="802" y="114.00" width="40" height="6.50" fill="#008bff"/>
<rect x="802" y="107.80" width="40" height="6.50" fill="#00bbff"/>
<rect x="802" y="101.60" width="40" height="6.50" fill="#00fffc"/>
<rect x="802" y="95.40" width="40" height="6.50" fill="#00ffcc"/>
<rect x="802" y="89.20" width="40" height="6.50" fill="#00ff85"/>
<rect x="802" y="83.00" width="40" height="6.50" fill="#00ff55"/>
<rect x="802" y="76.80" width="40" height="6.50" fill="#00ff0e"/>
<rect x="802" y="70.60" width="40" height="6.50" fill="#22ff00"/>
<rect x="802" y="64.40" width="40" height="6.50" fill="#69ff00"/>
<rect x="802" y="58.20" width="40" height="6.50" fill="#99ff00"/>
<rect x="802" y="52.00" width="40" height="6.50" fill="#e0ff00"/>
<rect x="802" y="45.80" width="40" height="6.50" fill="#ffee00"/>
<rect x="802" y="39.60" width="40" height="6.50" fill="#ffa700"/>
<rect x="802" y="33.40" width="40" height="6.50" fill="#ff7700"/>
<rect x="802" y="27.20" width="40" height="6.50" fill="#ff3000"/>
<rect x="802" y="21.00" width="40" height="6.50" fill="#ff0000"/>
<rect x="842" y="21" width="1" height="125" fill="#000"/>
<rect x="95" y="189" width="704" height="1" fill="#000"/>
<rect x="95" y="313" width="704" height="1" fill="#000"/>
<rect x="95" y="189" width="1" height="125" fill="#000"/>
<rect x="798" y="189" width="1" height="125" fill="#000"/>
<text x="91" y="317.6" font-size="11.5" text-anchor="end">0</text>
<rect x="95" y="297" width="22" height="1" fill="#000"/>
<text x="91" y="301.6" font-size="11.5" text-anchor="end">20</text>
<rect x="95" y="282" width="22" height="1" fill="#000"/>
<text x="91" y="286.6" font-size="11.5" text-anchor="end">40</text>
<rect x="95" y="266" width="22" height="1" fill="#000"/>
<text x="91" y="270.6" font-size="11.5" text-anchor="end">60</text>
<rect x="95" y="251" width="22" height="1" fill="#000"/>
<text x="91" y="255.6" font-size="11.5" text-anchor="end">80</text>
<rect x="95" y="235" width="22" height="1" fill="#000"/>
<text x="91" y="239.6" font-size="11.5" text-anchor="end">100</text>
<rect x="95" y="220" width="22" height="1" fill="#000"/>
<text x="91" y="224.6" font-size="11.5" text-anchor="end">120</text>
<rect x="95" y="204" width="22" height="1" fill="#000"/>
<text x="91" y="208.6" font-size="11.5" text-anchor="end">140</text>
<rect x="95" y="189" width="22" height="1" fill="#000"/>
<text x="91" y="193.6" font-size="11.5" text-anchor="end">160</text>
<rect x="180" y="309" width="1" height="4" fill="#000"/>
<rect x="264" y="309" width="1" height="4" fill="#000"/>
<rect x="349" y="309" width="1" height="4" fill="#000"/>
<rect x="433" y="309" width="1" height="4" fill="#000"/>
<rect x="517" y="309" width="1" height="4" fill="#000"/>
<rect x="602" y="309" width="1" height="4" fill="#000"/>
<rect x="686" y="309" width="1" height="4" fill="#000"/>
<rect x="771" y="309" width="1" height="4" fill="#000"/>
<text x="95.5" y="323" font-size="11.5" text-anchor="middle">0</text>
<text x="180.5" y="323" font-size="11.5" text-anchor="middle">50</text>
<text x="264.5" y="323" font-size="11.5" text-anchor="middle">100</text>
<text x="349.5" y="323" font-size="11.5" text-anchor="middle">150</text>
<text x="433.5" y="323" font-size="11.5" text-anchor="middle">200</text>
<text x="517.5" y="323" font-size="11.5" text-anchor="middle">250</text>
<text x="602.5" y="323" font-size="11.5" text-anchor="middle">300</text>
<text x="686.5" y="323" font-size="11.5" text-anchor="middle">350</text>
<text x="771.5" y="323" font-size="11.5" text-anchor="middle">400</text>
<text x="95" y="186" font-size="14">Bump bonding map</text>
<rect x="95" y="251" width="703" height="62" fill="url(#h)"/>
<rect x="802" y="306.80" width="40" height="6.50" fill="#6300ff"/>
<rect x="802" y="300.60" width="40" height="6.50" fill="#3300ff"/>
<rect x="802" y="294.40" width="40" height="6.50" fill="#0014ff"/>
<rect x="802" y="288.20" width="40" height="6.50" fill="#0044ff"/>
<rect x="802" y="282.00" width="40" height="6.50" fill="#008bff"/>
<rect x="802" y="275.80" width="40" height="6.50" fill="#00bbff"/>
<rect x="802" y="269.60" width="40" height="6.50" fill="#00fffc"/>
<rect x="802" y="263.40" width="40" height="6.50" fill="#00ffcc"/>
<rect x="802" y="257.20" width="40" height="6.50" fill="#00ff85"/>
<rect x="802" y="251.00" width="40" height="6.50" fill="#00ff55"/>
<rect x="802" y="244.80" width="40" height="6.50" fill="#00ff0e"/>
<rect x="802" y="238.60" width="40" height="6.50" fill="#22ff00"/>
<rect x="802" y="232.40" width="40" height="6.50" fill="#69ff00"/>
<rect x="802" y="226.20" width="40" height="6.50" fill="#99ff00"/>
<rect x="802" y="220.00" width="40" height="6.50" fill="#e0ff00"/>
<rect x="802" y="213.80" width="40" height="6.50" fill="#ffee00"/>
<rect x="802" y="207.60" width="40" height="6.50" fill="#ffa700"/>
<rect x="802" y="201.40" width="40" height="6.50" fill="#ff7700"/>
<rect x="802" y="195.20" width="40" height="6.50" fill="#ff3000"/>
<rect x="802" y="189.00" width="40" height="6.50" fill="#ff0000"/>
<rect x="842" y="189" width="1" height="125" fill="#000"/>
<text x="821" y="17" font-size="14" text-anchor="end">M0318-070321.14:40T-10a</text>
<rect x="821" y="145" width="21" height="1" fill="#000"/>
<text x="846" y="147.2" font-size="6" class="s" font-weight="bold">0</text>
<rect x="821" y="126" width="21" height="1" fill="#000"/>
<text x="846" y="128.2" font-size="6" class="s" font-weight="bold">20</text>
<rect x="821" y="107" width="21" height="1" fill="#000"/>
<text x="846" y="109.2" font-size="6" class="s" font-weight="bold">40</text>
<rect x="821" y="89" width="21" height="1" fill="#000"/>
<text x="846" y="91.2" font-size="6" class="s" font-weight="bold">60</text>
<rect x="821" y="70" width="21" height="1" fill="#000"/>
<text x="846" y="72.2" font-size="6" class="s" font-weight="bold">80</text>
<rect x="821" y="51" width="21" height="1" fill="#000"/>
<text x="846" y="53.2" font-size="6" class="s" font-weight="bold">100</text>
<rect x="821" y="32" width="21" height="1" fill="#000"/>
<text x="846" y="34.2" font-size="6" class="s" font-weight="bold">120</text>
<rect x="821" y="145" width="21" height="1" fill="#000"/>
<rect x="821" y="313" width="21" height="1" fill="#000"/>
<text x="846" y="315.2" font-size="6" class="s" font-weight="bold">-2</text>
<rect x="821" y="297" width="21" height="1" fill="#000"/>
<text x="846" y="299.2" font-size="6" class="s" font-weight="bold">-1.5</text>
<rect x="821" y="282" width="21" height="1" fill="#000"/>
<text x="846" y="284.2" font-size="6" class="s" font-weight="bold">-1</text>
<rect x="821" y="266" width="21" height="1" fill="#000"/>
<text x="846" y="268.2" font-size="6" class="s" font-weight="bold">-0.5</text>
<rect x="821" y="251" width="21" height="1" fill="#000"/>
<text x="846" y="253.2" font-size="6" class="s" font-weight="bold">0</text>
<rect x="821" y="235" width="21" height="1" fill="#000"/>
<text x="846" y="237.2" font-size="6" class="s" font-weight="bold">0.5</text>
<rect x="821" y="220" width="21" height="1" fill="#000"/>
<text x="846" y="222.2" font-size="6" class="s" font-weight="bold">1</text>
<rect x="821" y="204" width="21" height="1" fill="#000"/>
<text x="846" y="206.2" font-size="6" class="s" font-weight="bold">1.5</text>
<rect x="821" y="189" width="21" height="1" fill="#000"/>
<text x="846" y="191.2" font-size="6" class="s" font-weight="bold">2</text>
<text x="312" y="355" font-size="13" font-weight="bold">Test Summary of C</text>
<text x="436" y="355" font-size="13" font-weight="bold">FINAL</text>
<text x="766" y="355" font-size="13" font-weight="bold">GRADE:&#160; C</text>
<text x="312" y="379" font-size="13">ROCs &gt; 1% defects:</text>
<text x="446" y="379" font-size="13">0</text>
<text x="312" y="396" font-size="13">Dead Pixel:</text>
<text x="446" y="396" font-size="13">0</text>
<text x="312" y="413" font-size="13">Mask Defects:</text>
<text x="446" y="413" font-size="13">0</text>
<text x="312" y="430" font-size="13">Dead Bumps:</text>
<text x="446" y="430" font-size="13">0</text>
<text x="312" y="447" font-size="13">Dead Trimbits:</text>
<text x="446" y="447" font-size="13">0</text>
<text x="312" y="464" font-size="13">Address Probl:</text>
<text x="446" y="464" font-size="13">0</text>
<text x="507" y="379.0" font-size="13">Tested on:</text>
<text x="604" y="379.0" font-size="13">&#160;0</text>
<text x="507" y="395.7" font-size="13">Temp. [<tspan baseline-shift="super" font-size="9">o</tspan>C]:</text>
<text x="604" y="395.7" font-size="13">0.0 +- 0.0</text>
<text x="507" y="412.4" font-size="13">Trim / phCal:</text>
<text x="604" y="412.4" font-size="13">&#160;/</text>
<text x="507" y="429.1" font-size="13">Therm. cycl.:</text>
<text x="604" y="429.1" font-size="13"></text>
<text x="507" y="445.8" font-size="13">TBM1:</text>
<text x="604" y="445.8" font-size="13">ok</text>
<text x="507" y="462.5" font-size="13">TBM2:</text>
<text x="604" y="462.5" font-size="13">ok</text>
<text x="670" y="379.0" font-size="13">Noise [e]</text>
<text x="800" y="379.0" font-size="13">145.9</text>
<text x="670" y="395.7" font-size="13">Vcal Thr. Width [e]</text>
<text x="800" y="395.7" font-size="13">82.6</text>
<text x="670" y="412.4" font-size="13">Rel. Gain Width [%]</text>
<text x="800" y="412.4" font-size="13">0.0</text>
<text x="670" y="429.1" font-size="13">Pedestal Spread [e]</text>
<text x="800" y="429.1" font-size="13">0.0</text>
<rect x="47" y="616" width="20" height="1" fill="#0000ff"/>
<rect x="66" y="618" width="20" height="1" fill="#0000ff"/>
<rect x="85" y="618" width="20" height="1" fill="#0000ff"/>
<rect x="104" y="619" width="20" height="1" fill="#0000ff"/>
<rect x="123" y="618" width="19" height="1" fill="#0000ff"/>
<rect x="141" y="620" width="20" height="1" fill="#0000ff"/>
<rect x="160" y="620" width="20" height="1" fill="#0000ff"/>
<rect x="179" y="618" width="20" height="1" fill="#0000ff"/>
<rect x="56" y="613" width="1" height="7" fill="#0000ff"/>
<rect x="54" y="614" width="5" height="5" fill="#fff"/>
<rect x="55" y="614" width="3" height="1" fill="#0000ff"/>
<rect x="55" y="618" width="3" height="1" fill="#0000ff"/>
<rect x="54" y="615" width="1" height="3" fill="#0000ff"/>
<rect x="58" y="615" width="1" height="3" fill="#0000ff"/>
<rect x="75" y="615" width="1" height="8" fill="#0000ff"/>
<rect x="73" y="616" width="5" height="5" fill="#fff"/>
<rect x="74" y="616" width="3" height="1" fill="#0000ff"/>
<rect x="74" y="620" width="3" height="1" fill="#0000ff"/>
<rect x="73" y="617" width="1" height="3" fill="#0000ff"/>
<rect x="77" y="617" width="1" height="3" fill="#0000ff"/>
<rect x="94" y="614" width="1" height="9" fill="#0000ff"/>
<rect x="92" y="616" width="5" height="5" fill="#fff"/>
<rect x="93" y="616" width="3" height="1" fill="#0000ff"/>
<rect x="93" y="620" width="3" height="1" fill="#0000ff"/>
<rect x="92" y="617" width="1" height="3" fill="#0000ff"/>
<rect x="96" y="617" width="1" height="3" fill="#0000ff"/>
<rect x="113" y="616" width="1" height="7" fill="#0000ff"/>
<rect x="111" y="617" width="5" height="5" fill="#fff"/>
<rect x="112" y="617" width="3" height="1" fill="#0000ff"/>
<rect x="112" y="621" width="3" height="1" fill="#0000ff"/>
<rect x="111" y="618" width="1" height="3" fill="#0000ff"/>
<rect x="115" y="618" width="1" height="3" fill="#0000ff"/>
<rect x="132" y="614" width="1" height="9" fill="#0000ff"/>
<rect x="130" y="616" width="5" height="5" fill="#fff"/>
<rect x="131" y="616" width="3" height="1" fill="#0000ff"/>
<rect x="131" y="620" width="3" height="1" fill="#0000ff"/>
<rect x="130" y="617" width="1" height="3" fill="#0000ff"/>
<rect x="134" y="617" width="1" height="3" fill="#0000ff"/>
<rect x="151" y="616" width="1" height="9" fill="#0000ff"/>
<rect x="149" y="618" width="5" height="5" fill="#fff"/>
<rect x="150" y="618" width="3" height="1" fill="#0000ff"/>
<rect x="150" y="622" width="3" height="1" fill="#0000ff"/>
<rect x="149" y="619" width="1" height="3" fill="#0000ff"/>
<rect x="153" y="619" width="1" height="3" fill="#0000ff"/>
<rect x="170" y="616" width="1" height="9" fill="#0000ff"/>
<rect x="168" y="618" width="5" height="5" fill="#fff"/>
<rect x="169" y="618" width="3" height="1" fill="#0000ff"/>
<rect x="169" y="622" width="3" height="1" fill="#0000ff"/>
<rect x="168" y="619" width="1" height="3" fill="#0000ff"/>
<rect x="172" y="619" width="1" height="3" fill="#0000ff"/>
<rect x="189" y="613" width="1" height="11" fill="#0000ff"/>
<rect x="187" y="616" width="5" height="5" fill="#fff"/>
<rect x="188" y="616" width="3" height="1" fill="#0000ff"/>
<rect x="188" y="620" width="3" height="1" fill="#0000ff"/>
<rect x="187" y="617" width="1" height="3" fill="#0000ff"/>
<rect x="191" y="617" width="1" height="3" fill="#0000ff"/>
<rect x="47" y="527" width="152" height="1" fill="#000"/>
<rect x="47" y="648" width="152" height="1" fill="#000"/>
<rect x="47" y="527" width="1" height="122" fill="#000"/>
<rect x="198" y="527" width="1" height="122" fill="#000"/>
<text x="45.4" y="650.3" font-size="11" text-anchor="end">0</text>
<rect x="47" y="628" width="6" height="1" fill="#000"/>
<text x="45.4" y="630.3" font-size="11" text-anchor="end">100</text>
<rect x="47" y="607" width="6" height="1" fill="#000"/>
<text x="45.4" y="609.3" font-size="11" text-anchor="end">200</text>
<rect x="47" y="587" width="6" height="1" fill="#000"/>
<text x="45.4" y="589.3" font-size="11" text-anchor="end">300</text>
<rect x="47" y="567" width="6" height="1" fill="#000"/>
<text x="45.4" y="569.3" font-size="11" text-anchor="end">400</text>
<rect x="47" y="547" width="6" height="1" fill="#000"/>
<text x="45.4" y="549.3" font-size="11" text-anchor="end">500</text>
<text x="45.4" y="529.3" font-size="11" text-anchor="end">600</text>
<text x="47.5" y="658" font-size="11" text-anchor="middle">0</text>
<rect x="66" y="644" width="1" height="4" fill="#000"/>
<text x="66.5" y="658" font-size="11" text-anchor="middle">1</text>
<rect x="85" y="644" width="1" height="4" fill="#000"/>
<text x="85.5" y="658" font-size="11" text-anchor="middle">2</text>
<rect x="104" y="644" width="1" height="4" fill="#000"/>
<text x="104.5" y="658" font-size="11" text-anchor="middle">3</text>
<rect x="123" y="644" width="1" height="4" fill="#000"/>
<text x="123.5" y="658" font-size="11" text-anchor="middle">4</text>
<rect x="141" y="644" width="1" height="4" fill="#000"/>
<text x="141.5" y="658" font-size="11" text-anchor="middle">5</text>
<rect x="160" y="644" width="1" height="4" fill="#000"/>
<text x="160.5" y="658" font-size="11" text-anchor="middle">6</text>
<rect x="179" y="644" width="1" height="4" fill="#000"/>
<text x="179.5" y="658" font-size="11" text-anchor="middle">7</text>
<text x="198.5" y="658" font-size="11" text-anchor="middle">8</text>
<text x="57" y="521" font-size="13">Noise</text>
<line x1="47" y1="547.5" x2="198" y2="547.5" stroke="#ff0000" stroke-width="1" stroke-dasharray="3,3" shape-rendering="crispEdges"/>
<rect x="274" y="610" width="5" height="1" fill="#52d452"/>
<rect x="274" y="614" width="5" height="1" fill="#52d452"/>
<rect x="274" y="611" width="1" height="3" fill="#52d452"/>
<rect x="278" y="611" width="1" height="3" fill="#52d452"/>
<rect x="293" y="612" width="5" height="1" fill="#52d452"/>
<rect x="293" y="616" width="5" height="1" fill="#52d452"/>
<rect x="293" y="613" width="1" height="3" fill="#52d452"/>
<rect x="297" y="613" width="1" height="3" fill="#52d452"/>
<rect x="312" y="612" width="5" height="1" fill="#52d452"/>
<rect x="312" y="616" width="5" height="1" fill="#52d452"/>
<rect x="312" y="613" width="1" height="3" fill="#52d452"/>
<rect x="316" y="613" width="1" height="3" fill="#52d452"/>
<rect x="331" y="610" width="5" height="1" fill="#52d452"/>
<rect x="331" y="614" width="5" height="1" fill="#52d452"/>
<rect x="331" y="611" width="1" height="3" fill="#52d452"/>
<rect x="335" y="611" width="1" height="3" fill="#52d452"/>
<rect x="350" y="612" width="5" height="1" fill="#52d452"/>
<rect x="350" y="616" width="5" height="1" fill="#52d452"/>
<rect x="350" y="613" width="1" height="3" fill="#52d452"/>
<rect x="354" y="613" width="1" height="3" fill="#52d452"/>
<rect x="369" y="615" width="5" height="1" fill="#52d452"/>
<rect x="369" y="619" width="5" height="1" fill="#52d452"/>
<rect x="369" y="616" width="1" height="3" fill="#52d452"/>
<rect x="373" y="616" width="1" height="3" fill="#52d452"/>
<rect x="388" y="615" width="5" height="1" fill="#52d452"/>
<rect x="388" y="619" width="5" height="1" fill="#52d452"/>
<rect x="388" y="616" width="1" height="3" fill="#52d452"/>
<rect x="392" y="616" width="1" height="3" fill="#52d452"/>
<rect x="407" y="613" width="5" height="1" fill="#52d452"/>
<rect x="407" y="617" width="5" height="1" fill="#52d452"/>
<rect x="407" y="614" width="1" height="3" fill="#52d452"/>
<rect x="411" y="614" width="1" height="3" fill="#52d452"/>
<rect x="276" y="612" width="1" height="1" fill="#52d452"/>
<rect x="277" y="612" width="1" height="1" fill="#52d452"/>
<rect x="278" y="612" width="1" height="1" fill="#52d452"/>
<rect x="279" y="612" width="1" height="1" fill="#52d452"/>
<rect x="280" y="612" width="1" height="1" fill="#52d452"/>
<rect x="281" y="613" width="1" height="1" fill="#52d452"/>
<rect x="282" y="613" width="1" height="1" fill="#52d452"/>
<rect x="283" y="613" width="1" height="1" fill="#52d452"/>
<rect x="284" y="613" width="1" height="1" fill="#52d452"/>
<rect x="285" y="613" width="1" height="1" fill="#52d452"/>
<rect x="286" y="613" width="1" height="1" fill="#52d452"/>
<rect x="287" y="613" width="1" height="1" fill="#52d452"/>
<rect x="288" y="613" width="1" height="1" fill="#52d452"/>
<rect x="289" y="613" width="1" height="1" fill="#52d452"/>
<rect x="290" y="613" width="1" height="1" fill="#52d452"/>
<rect x="291" y="614" width="1" height="1" fill="#52d452"/>
<rect x="292" y="614" width="1" height="1" fill="#52d452"/>
<rect x="293" y="614" width="1" height="1" fill="#52d452"/>
<rect x="294" y="614" width="1" height="1" fill="#52d452"/>
<rect x="295" y="614" width="1" height="1" fill="#52d452"/>
<rect x="295" y="614" width="1" height="1" fill="#52d452"/>
<rect x="296" y="614" width="1" height="1" fill="#52d452"/>
<rect x="297" y="614" width="1" height="1" fill="#52d452"/>
<rect x="298" y="614" width="1" height="1" fill="#52d452"/>
<rect x="299" y="614" width="1" height="1" fill="#52d452"/>
<rect x="300" y="614" width="1" height="1" fill="#52d452"/>
<rect x="301" y="614" width="1" height="1" fill="#52d452"/>
<rect x="302" y="614" width="1" height="1" fill="#52d452"/>
<rect x="303" y="614" width="1" height="1" fill="#52d452"/>
<rect x="304" y="614" width="1" height="1" fill="#52d452"/>
<rect x="305" y="614" width="1" height="1" fill="#52d452"/>
<rect x="306" y="614" width="1" height="1" fill="#52d452"/>
<rect x="307" y="614" width="1" height="1" fill="#52d452"/>
<rect x="308" y="614" width="1" height="1" fill="#52d452"/>
<rect x="309" y="614" width="1" height="1" fill="#52d452"/>
<rect x="310" y="614" width="1" height="1" fill="#52d452"/>
<rect x="311" y="614" width="1" height="1" fill="#52d452"/>
<rect x="312" y="614" width="1" height="1" fill="#52d452"/>
<rect x="313" y="614" width="1" height="1" fill="#52d452"/>
<rect x="314" y="614" width="1" height="1" fill="#52d452"/>
<rect x="314" y="614" width="1" height="1" fill="#52d452"/>
<rect x="315" y="614" width="1" height="1" fill="#52d452"/>
<rect x="316" y="614" width="1" height="1" fill="#52d452"/>
<rect x="317" y="614" width="1" height="1" fill="#52d452"/>
<rect x="318" y="614" width="1" height="1" fill="#52d452"/>
<rect x="319" y="613" width="1" height="1" fill="#52d452"/>
<rect x="320" y="613" width="1" height="1" fill="#52d452"/>
<rect x="321" y="613" width="1" height="1" fill="#52d452"/>
<rect x="322" y="613" width="1" height="1" fill="#52d452"/>
<rect x="323" y="613" width="1" height="1" fill="#52d452"/>
<rect x="324" y="613" width="1" height="1" fill="#52d452"/>
<rect x="325" y="613" width="1" height="1" fill="#52d452"/>
<rect x="326" y="613" width="1" height="1" fill="#52d452"/>
<rect x="327" y="613" width="1" height="1" fill="#52d452"/>
<rect x="328" y="613" width="1" height="1" fill="#52d452"/>
<rect x="329" y="612" width="1" height="1" fill="#52d452"/>
<rect x="330" y="612" width="1" height="1" fill="#52d452"/>
<rect x="331" y="612" width="1" height="1" fill="#52d452"/>
<rect x="332" y="612" width="1" height="1" fill="#52d452"/>
<rect x="333" y="612" width="1" height="1" fill="#52d452"/>
<rect x="333" y="612" width="1" height="1" fill="#52d452"/>
<rect x="334" y="612" width="1" height="1" fill="#52d452"/>
<rect x="335" y="612" width="1" height="1" fill="#52d452"/>
<rect x="336" y="612" width="1" height="1" fill="#52d452"/>
<rect x="337" y="612" width="1" height="1" fill="#52d452"/>
<rect x="338" y="613" width="1" height="1" fill="#52d452"/>
<rect x="339" y="613" width="1" height="1" fill="#52d452"/>
<rect x="340" y="613" width="1" height="1" fill="#52d452"/>
<rect x="341" y="613" width="1" height="1" fill="#52d452"/>
<rect x="342" y="613" width="1" height="1" fill="#52d452"/>
<rect x="343" y="613" width="1" height="1" fill="#52d452"/>
<rect x="344" y="613" width="1" height="1" fill="#52d452"/>
<rect x="345" y="613" width="1" height="1" fill="#52d452"/>
<rect x="346" y="613" width="1" height="1" fill="#52d452"/>
<rect x="347" y="613" width="1" height="1" fill="#52d452"/>
<rect x="348" y="614" width="1" height="1" fill="#52d452"/>
<rect x="349" y="614" width="1" height="1" fill="#52d452"/>
<rect x="350" y="614" width="1" height="1" fill="#52d452"/>
<rect x="351" y="614" width="1" height="1" fill="#52d452"/>
<rect x="352" y="614" width="1" height="1" fill="#52d452"/>
<rect x="352" y="614" width="1" height="1" fill="#52d452"/>
<rect x="353" y="614" width="1" height="1" fill="#52d452"/>
<rect x="354" y="614" width="1" height="1" fill="#52d452"/>
<rect x="355" y="614" width="1" height="1" fill="#52d452"/>
<rect x="356" y="615" width="1" height="1" fill="#52d452"/>
<rect x="357" y="615" width="1" height="1" fill="#52d452"/>
<rect x="358" y="615" width="1" height="1" fill="#52d452"/>
<rect x="359" y="615" width="1" height="1" fill="#52d452"/>
<rect x="360" y="615" width="1" height="1" fill="#52d452"/>
<rect x="361" y="615" width="1" height="1" fill="#52d452"/>
<rect x="362" y="616" width="1" height="1" fill="#52d452"/>
<rect x="363" y="616" width="1" height="1" fill="#52d452"/>
<rect x="364" y="616" width="1" height="1" fill="#52d452"/>
<rect x="365" y="616" width="1" height="1" fill="#52d452"/>
<rect x="366" y="616" width="1" height="1" fill="#52d452"/>
<rect x="367" y="616" width="1" height="1" fill="#52d452"/>
<rect x="368" y="617" width="1" height="1" fill="#52d452"/>
<rect x="369" y="617" width="1" height="1" fill="#52d452"/>
<rect x="370" y="617" width="1" height="1" fill="#52d452"/>
<rect x="371" y="617" width="1" height="1" fill="#52d452"/>
<rect x="371" y="617" width="1" height="1" fill="#52d452"/>
<rect x="372" y="617" width="1" height="1" fill="#52d452"/>
<rect x="373" y="617" width="1" height="1" fill="#52d452"/>
<rect x="374" y="617" width="1" height="1" fill="#52d452"/>
<rect x="375" y="617" width="1" height="1" fill="#52d452"/>
<rect x="376" y="617" width="1" height="1" fill="#52d452"/>
<rect x="377" y="617" width="1" height="1" fill="#52d452"/>
<rect x="378" y="617" width="1" height="1" fill="#52d452"/>
<rect x="379" y="617" width="1" height="1" fill="#52d452"/>
<rect x="380" y="617" width="1" height="1" fill="#52d452"/>
<rect x="381" y="617" width="1" height="1" fill="#52d452"/>
<rect x="382" y="617" width="1" height="1" fill="#52d452"/>
<rect x="383" y="617" width="1" height="1" fill="#52d452"/>
<rect x="384" y="617" width="1" height="1" fill="#52d452"/>
<rect x="385" y="617" width="1" height="1" fill="#52d452"/>
<rect x="386" y="617" width="1" height="1" fill="#52d452"/>
<rect x="387" y="617" width="1" height="1" fill="#52d452"/>
<rect x="388" y="617" width="1" height="1" fill="#52d452"/>
<rect x="389" y="617" width="1" height="1" fill="#52d452"/>
<rect x="390" y="617" width="1" height="1" fill="#52d452"/>
<rect x="390" y="617" width="1" height="1" fill="#52d452"/>
<rect x="391" y="617" width="1" height="1" fill="#52d452"/>
<rect x="392" y="617" width="1" height="1" fill="#52d452"/>
<rect x="393" y="617" width="1" height="1" fill="#52d452"/>
<rect x="394" y="617" width="1" height="1" fill="#52d452"/>
<rect x="395" y="616" width="1" height="1" fill="#52d452"/>
<rect x="396" y="616" width="1" height="1" fill="#52d452"/>
<rect x="397" y="616" width="1" height="1" fill="#52d452"/>
<rect x="398" y="616" width="1" height="1" fill="#52d452"/>
<rect x="399" y="616" width="1" height="1" fill="#52d452"/>
<rect x="400" y="616" width="1" height="1" fill="#52d452"/>
<rect x="401" y="616" width="1" height="1" fill="#52d452"/>
<rect x="402" y="616" width="1" height="1" fill="#52d452"/>
<rect x="403" y="616" width="1" height="1" fill="#52d452"/>
<rect x="404" y="616" width="1" height="1" fill="#52d452"/>
<rect x="405" y="615" width="1" height="1" fill="#52d452"/>
<rect x="406" y="615" width="1" height="1" fill="#52d452"/>
<rect x="407" y="615" width="1" height="1" fill="#52d452"/>
<rect x="408" y="615" width="1" height="1" fill="#52d452"/>
<rect x="409" y="615" width="1" height="1" fill="#52d452"/>
<rect x="267" y="527" width="152" height="1" fill="#000"/>
<rect x="267" y="648" width="152" height="1" fill="#000"/>
<rect x="267" y="527" width="1" height="122" fill="#000"/>
<rect x="418" y="527" width="1" height="122" fill="#000"/>
<text x="265.4" y="650.3" font-size="11" text-anchor="end">0</text>
<rect x="267" y="628" width="6" height="1" fill="#000"/>
<text x="265.4" y="630.3" font-size="11" text-anchor="end">50</text>
<rect x="267" y="607" width="6" height="1" fill="#000"/>
<text x="265.4" y="609.3" font-size="11" text-anchor="end">100</text>
<rect x="267" y="587" width="6" height="1" fill="#000"/>
<text x="265.4" y="589.3" font-size="11" text-anchor="end">150</text>
<rect x="267" y="567" width="6" height="1" fill="#000"/>
<text x="265.4" y="569.3" font-size="11" text-anchor="end">200</text>
<rect x="267" y="547" width="6" height="1" fill="#000"/>
<text x="265.4" y="549.3" font-size="11" text-anchor="end">250</text>
<text x="265.4" y="529.3" font-size="11" text-anchor="end">300</text>
<text x="267.5" y="658" font-size="11" text-anchor="middle">0</text>
<rect x="286" y="644" width="1" height="4" fill="#000"/>
<text x="286.5" y="658" font-size="11" text-anchor="middle">1</text>
<rect x="305" y="644" width="1" height="4" fill="#000"/>
<text x="305.5" y="658" font-size="11" text-anchor="middle">2</text>
<rect x="324" y="644" width="1" height="4" fill="#000"/>
<text x="324.5" y="658" font-size="11" text-anchor="middle">3</text>
<rect x="343" y="644" width="1" height="4" fill="#000"/>
<text x="343.5" y="658" font-size="11" text-anchor="middle">4</text>
<rect x="361" y="644" width="1" height="4" fill="#000"/>
<text x="361.5" y="658" font-size="11" text-anchor="middle">5</text>
<rect x="380" y="644" width="1" height="4" fill="#000"/>
<text x="380.5" y="658" font-size="11" text-anchor="middle">6</text>
<rect x="399" y="644" width="1" height="4" fill="#000"/>
<text x="399.5" y="658" font-size="11" text-anchor="middle">7</text>
<text x="418.5" y="658" font-size="11" text-anchor="middle">8</text>
<text x="276" y="521" font-size="13">Vcal Thr. Width</text>
<line x1="267" y1="567.5" x2="418" y2="567.5" stroke="#ff0000" stroke-width="1" stroke-dasharray="3,3" shape-rendering="crispEdges"/>
<rect x="495" y="646" width="1" height="1" fill="#ff00ff"/>
<rect x="495" y="647" width="2" height="1" fill="#ff00ff"/>
<rect x="494" y="648" width="4" height="1" fill="#ff00ff"/>
<rect x="494" y="649" width="1" height="1" fill="#ff00ff"/>
<rect x="497" y="649" width="1" height="1" fill="#ff00ff"/>
<rect x="493" y="650" width="5" height="1" fill="#ff00ff"/>
<rect x="514" y="646" width="1" height="1" fill="#ff00ff"/>
<rect x="514" y="647" width="2" height="1" fill="#ff00ff"/>
<rect x="513" y="648" width="4" height="1" fill="#ff00ff"/>
<rect x="513" y="649" width="1" height="1" fill="#ff00ff"/>
<rect x="516" y="649" width="1" height="1" fill="#ff00ff"/>
<rect x="512" y="650" width="5" height="1" fill="#ff00ff"/>
<rect x="533" y="646" width="1" height="1" fill="#ff00ff"/>
<rect x="533" y="647" width="2" height="1" fill="#ff00ff"/>
<rect x="532" y="648" width="4" height="1" fill="#ff00ff"/>
<rect x="532" y="649" width="1" height="1" fill="#ff00ff"/>
<rect x="535" y="649" width="1" height="1" fill="#ff00ff"/>
<rect x="531" y="650" width="5" height="1" fill="#ff00ff"/>
<rect x="552" y="646" width="1" height="1" fill="#ff00ff"/>
<rect x="552" y="647" width="2" height="1" fill="#ff00ff"/>
<rect x="551" y="648" width="4" height="1" fill="#ff00ff"/>
<rect x="551" y="649" width="1" height="1" fill="#ff00ff"/>
<rect x="554" y="649" width="1" height="1" fill="#ff00ff"/>
<rect x="550" y="650" width="5" height="1" fill="#ff00ff"/>
<rect x="571" y="646" width="1" height="1" fill="#ff00ff"/>
<rect x="571" y="647" width="2" height="1" fill="#ff00ff"/>
<rect x="570" y="648" width="4" height="1" fill="#ff00ff"/>
<rect x="570" y="649" width="1" height="1" fill="#ff00ff"/>
<rect x="573" y="649" width="1" height="1" fill="#ff00ff"/>
<rect x="569" y="650" width="5" height="1" fill="#ff00ff"/>
<rect x="590" y="646" width="1" height="1" fill="#ff00ff"/>
<rect x="590" y="647" width="2" height="1" fill="#ff00ff"/>
<rect x="589" y="648" width="4" height="1" fill="#ff00ff"/>
<rect x="589" y="649" width="1" height="1" fill="#ff00ff"/>
<rect x="592" y="649" width="1" height="1" fill="#ff00ff"/>
<rect x="588" y="650" width="5" height="1" fill="#ff00ff"/>
<rect x="609" y="646" width="1" height="1" fill="#ff00ff"/>
<rect x="609" y="647" width="2" height="1" fill="#ff00ff"/>
<rect x="608" y="648" width="4" height="1" fill="#ff00ff"/>
<rect x="608" y="649" width="1" height="1" fill="#ff00ff"/>
<rect x="611" y="649" width="1" height="1" fill="#ff00ff"/>
<rect x="607" y="650" width="5" height="1" fill="#ff00ff"/>
<rect x="628" y="646" width="1" height="1" fill="#ff00ff"/>
<rect x="628" y="647" width="2" height="1" fill="#ff00ff"/>
<rect x="627" y="648" width="4" height="1" fill="#ff00ff"/>
<rect x="627" y="649" width="1" height="1" fill="#ff00ff"/>
<rect x="630" y="649" width="1" height="1" fill="#ff00ff"/>
<rect x="626" y="650" width="5" height="1" fill="#ff00ff"/>
<rect x="486" y="527" width="152" height="1" fill="#000"/>
<rect x="486" y="648" width="152" height="1" fill="#000"/>
<rect x="486" y="527" width="1" height="122" fill="#000"/>
<rect x="637" y="527" width="1" height="122" fill="#000"/>
<text x="484.4" y="650.3" font-size="11" text-anchor="end">0</text>
<rect x="486" y="632" width="6" height="1" fill="#000"/>
<text x="484.4" y="634.3" font-size="11" text-anchor="end">0.02</text>
<rect x="486" y="616" width="6" height="1" fill="#000"/>
<text x="484.4" y="618.3" font-size="11" text-anchor="end">0.04</text>
<rect x="486" y="599" width="6" height="1" fill="#000"/>
<text x="484.4" y="601.3" font-size="11" text-anchor="end">0.06</text>
<rect x="486" y="583" width="6" height="1" fill="#000"/>
<text x="484.4" y="585.3" font-size="11" text-anchor="end">0.08</text>
<rect x="486" y="567" width="6" height="1" fill="#000"/>
<text x="484.4" y="569.3" font-size="11" text-anchor="end">0.1</text>
<rect x="486" y="551" width="6" height="1" fill="#000"/>
<text x="484.4" y="553.3" font-size="11" text-anchor="end">0.12</text>
<rect x="486" y="535" width="6" height="1" fill="#000"/>
<text x="484.4" y="537.3" font-size="11" text-anchor="end">0.14</text>
<text x="486.5" y="658" font-size="11" text-anchor="middle">0</text>
<rect x="505" y="644" width="1" height="4" fill="#000"/>
<text x="505.5" y="658" font-size="11" text-anchor="middle">1</text>
<rect x="524" y="644" width="1" height="4" fill="#000"/>
<text x="524.5" y="658" font-size="11" text-anchor="middle">2</text>
<rect x="543" y="644" width="1" height="4" fill="#000"/>
<text x="543.5" y="658" font-size="11" text-anchor="middle">3</text>
<rect x="562" y="644" width="1" height="4" fill="#000"/>
<text x="562.5" y="658" font-size="11" text-anchor="middle">4</text>
<rect x="580" y="644" width="1" height="4" fill="#000"/>
<text x="580.5" y="658" font-size="11" text-anchor="middle">5</text>
<rect x="599" y="644" width="1" height="4" fill="#000"/>
<text x="599.5" y="658" font-size="11" text-anchor="middle">6</text>
<rect x="618" y="644" width="1" height="4" fill="#000"/>
<text x="618.5" y="658" font-size="11" text-anchor="middle">7</text>
<text x="637.5" y="658" font-size="11" text-anchor="middle">8</text>
<text x="496" y="521" font-size="13">Rel. Gain Width</text>
<line x1="486" y1="567.5" x2="637" y2="567.5" stroke="#ff0000" stroke-width="1" stroke-dasharray="3,3" shape-rendering="crispEdges"/>
<rect x="713" y="646" width="4" height="1" fill="#000"/>
<rect x="714" y="647" width="3" height="1" fill="#000"/>
<rect x="714" y="648" width="2" height="1" fill="#000"/>
<rect x="715" y="649" width="1" height="1" fill="#000"/>
<rect x="732" y="646" width="4" height="1" fill="#000"/>
<rect x="733" y="647" width="3" height="1" fill="#000"/>
<rect x="733" y="648" width="2" height="1" fill="#000"/>
<rect x="734" y="649" width="1" height="1" fill="#000"/>
<rect x="751" y="646" width="4" height="1" fill="#000"/>
<rect x="752" y="647" width="3" height="1" fill="#000"/>
<rect x="752" y="648" width="2" height="1" fill="#000"/>
<rect x="753" y="649" width="1" height="1" fill="#000"/>
<rect x="770" y="646" width="4" height="1" fill="#000"/>
<rect x="771" y="647" width="3" height="1" fill="#000"/>
<rect x="771" y="648" width="2" height="1" fill="#000"/>
<rect x="772" y="649" width="1" height="1" fill="#000"/>
<rect x="789" y="646" width="4" height="1" fill="#000"/>
<rect x="790" y="647" width="3" height="1" fill="#000"/>
<rect x="790" y="648" width="2" height="1" fill="#000"/>
<rect x="791" y="649" width="1" height="1" fill="#000"/>
<rect x="808" y="646" width="4" height="1" fill="#000"/>
<rect x="809" y="647" width="3" height="1" fill="#000"/>
<rect x="809" y="648" width="2" height="1" fill="#000"/>
<rect x="810" y="649" width="1" height="1" fill="#000"/>
<rect x="827" y="646" width="4" height="1" fill="#000"/>
<rect x="828" y="647" width="3" height="1" fill="#000"/>
<rect x="828" y="648" width="2" height="1" fill="#000"/>
<rect x="829" y="649" width="1" height="1" fill="#000"/>
<rect x="846" y="646" width="4" height="1" fill="#000"/>
<rect x="847" y="647" width="3" height="1" fill="#000"/>
<rect x="847" y="648" width="2" height="1" fill="#000"/>
<rect x="848" y="649" width="1" height="1" fill="#000"/>
<rect x="706" y="527" width="152" height="1" fill="#000"/>
<rect x="706" y="648" width="152" height="1" fill="#000"/>
<rect x="706" y="527" width="1" height="122" fill="#000"/>
<rect x="857" y="527" width="1" height="122" fill="#000"/>
<text x="704.4" y="650.3" font-size="11" text-anchor="end">0</text>
<rect x="706" y="631" width="6" height="1" fill="#000"/>
<text x="704.4" y="633.3" font-size="11" text-anchor="end">500</text>
<rect x="706" y="613" width="6" height="1" fill="#000"/>
<text x="704.4" y="615.3" font-size="11" text-anchor="end">1000</text>
<rect x="706" y="596" width="6" height="1" fill="#000"/>
<text x="704.4" y="598.3" font-size="11" text-anchor="end">1500</text>
<rect x="706" y="579" width="6" height="1" fill="#000"/>
<text x="704.4" y="581.3" font-size="11" text-anchor="end">2000</text>
<rect x="706" y="561" width="6" height="1" fill="#000"/>
<text x="704.4" y="563.3" font-size="11" text-anchor="end">2500</text>
<rect x="706" y="544" width="6" height="1" fill="#000"/>
<text x="704.4" y="546.3" font-size="11" text-anchor="end">3000</text>
<text x="704.4" y="529.3" font-size="11" text-anchor="end">3500</text>
<text x="706.5" y="658" font-size="11" text-anchor="middle">0</text>
<rect x="725" y="644" width="1" height="4" fill="#000"/>
<text x="725.5" y="658" font-size="11" text-anchor="middle">1</text>
<rect x="744" y="644" width="1" height="4" fill="#000"/>
<text x="744.5" y="658" font-size="11" text-anchor="middle">2</text>
<rect x="763" y="644" width="1" height="4" fill="#000"/>
<text x="763.5" y="658" font-size="11" text-anchor="middle">3</text>
<rect x="782" y="644" width="1" height="4" fill="#000"/>
<text x="782.5" y="658" font-size="11" text-anchor="middle">4</text>
<rect x="800" y="644" width="1" height="4" fill="#000"/>
<text x="800.5" y="658" font-size="11" text-anchor="middle">5</text>
<rect x="819" y="644" width="1" height="4" fill="#000"/>
<text x="819.5" y="658" font-size="11" text-anchor="middle">6</text>
<rect x="838" y="644" width="1" height="4" fill="#000"/>
<text x="838.5" y="658" font-size="11" text-anchor="middle">7</text>
<text x="857.5" y="658" font-size="11" text-anchor="middle">8</text>
<text x="715" y="521" font-size="13">Pedestal Spread</text>
<line x1="706" y1="561.5" x2="857" y2="561.5" stroke="#ff0000" stroke-width="1" stroke-dasharray="3,3" shape-rendering="crispEdges"/>
</svg>
<script>(function(){var P=[[99,0,255],[51,0,255],[0,20,255],[0,68,255],[0,139,255],[0,187,255],[0,255,252],[0,255,204],[0,255,133],[0,255,85],[0,255,14],[34,255,0],[105,255,0],[153,255,0],[224,255,0],[255,238,0],[255,167,0],[255,119,0],[255,48,0],[255,0,0]];var D="oonnnnnollnnnnnmmoonnnnnnnnnnnnnnnnmmnnoonnnoonoooonoonnnnnooooonnooooopppnnoopoooopooppoonmmnnmnnoonnnnnnoonnmmnnnnnnnnnnmnnnnnllnnnnonnnnonnoooppoooooppnnnnnooooooopppppppprrnnnnnppmmmnnommnnonnmmnmmmmnnnnnnnnoommnoonnonnnnonnmmmmonnmmmnnoopoonnnnnnnoooppppoooppooonnpppoonoonnooooooooooooooopponnppoooppoonooqqpoopppoooopqqppppoqqpppppqqpppooqppppqooooooooopponnqqooooooooooppoooppoooooooooopoooooopppppoppoopppppppppppppppqqpppppqqqqqqnnnnnnnnnnnnnnnnnnnnnnnnnnonnnnnnnnnoomnnooonnnnnnnooooonnppoooooooopppnnoooppooooonnoopnnnnonnoonoooonnnnnooonnooonnnnonnooooonnonnoonnnoonnooooopoooooppoooooooppooooonnnpppppppnnnoooooooooonnooooonnnooooppooooopnnoopnnoooooppoooppoooooppppppppppoopqqooppqppppprrnnoooooooonnooonnoonnnnnnnnmmnnnmmmmmnnnnnoooonoonnnoonnonnoooooooooooooonoooopoooooooooppnmmnnmnnnnnnnnnnnnmmnnnnnnnnnnnnnoommonnnnnnnnnnnonnoopooooooooooooooooonnoooppppopppponnmmnnonnmmnmmmmnmmnnnnnnnmmmoonnmoommnnnoonppmmnnnoommmnnnnmmmooooonnpooqqoooppnnoooqqoooooooooonooppppnoooomoooopnnppooooopppppppoppoopppppooopppooppppppppppqqppoppqqqqqqqqppoooooooooooooopnnoonoooooopoooopooppoooppooooooooppoooppoopppppoppppqppoopprppppopppprnnnnnnnnnnnnnnnnnnnnnnnnoonppoonnnoonnonnnnonnoonoonnoqqnnooooopppoopppooooooooopppnnppqoonnoppnnnnnnnooooonnpppnnooooonoonnonnoooppnnnnooooooooooooooopoopppppooppoooooooooooqqoooooooooooonnoppppooooopoooooonoooooooooooooooooooooooooopoopppoopppppooopppppppppppprrooooonnmnnnnooonnnnnnnnnmnnnnmnnmmnnnmmnnnoommnnnnnnnnnnooonnooooooooooooonnooooooopooppoonnnnnnnnnnnmmnnnnnnnnnnnnllnnnmmnllnnnnnmmnnnmmmmnooooonnnnoppoooooooppoooppppppppqqqqnnnnnnnnnnnnmoonnnnnnnnnnnnnnnnnnnnnnnnonnnnnnnnnmnnnnnnlnnnnmoonnnnnoonnnoonnnoooonooqqoooooooooopooqqpponnppooooooooooonnnnoooppppoooppooooopoooopooooppqppppppppppqqppqqqppqppnnoorooooooooooppoonppooppooooooooooooonnonnooooooooopoooooppooopppppppppqqpppqqqpppprnnnnnnnnnnnnnnnnnnnnnnnnnnnnnnnnnnnnnnooonnooooopoonnoppnnmmnoooooppoopoonnonnnnnoooopppnnnnnnnppnnnoomnnooooooooonoonnonnoonnnppooooooooooppnoooonoopponnppoopppoooppoopoopppqqooooonnnnoooooonnoopqqnnooonnpponnppooonnpnnoooooppppoooooqppppqoopppooooopppppppppqqqqqnnonnooonnnnoonoooonoooonnnoomnnnnnnnmmoonoooonppnnnoonnoppoooooppoooooooooooopoooooooppoomnnnnmnnnnnmmnnonnmmmmnnnnnmnnoonmmnnmnnmmnnmnnnnnnnnnoppnnooooooooooppoppppqooqqpooppnmmnnoonoonnnnnoomoonnmnnnnnnnmmoomoommnmmnnnnnmmnnnnnnnnnnnnmooooonnoooooooonnoooopooqqooooooppppnppoooooooooooonnpoooooooppooooonnpppoopppoonoooopppoopppqqpppppppoqqpprppppqoooooonooppnpppppoooooppoonnoooppooooooppoopppoooooppooqppppoppooppppppppppoopqqppqqqqqsnnnnnnnnnnnnnnnnnnnnnnnnnnnoooonoonnnnnooooonnnnoooooonnoooooooooooonnooooooppnnoooooppqoonnonnppnooooonnnnooonnnnonnnnoppooooonnpppoooooooooooooonmmoopoooooopppoopppoooppqqpqqooooooooopppoopoopppooooooooooooppoooppnnoppoooppppppqoooopooppoppppppppprqqppqqnqqqqpqqoonnnnnnoonnnnonnnnnnnmmnnnllmmmnnnmmmmnnnnnoomnnnnnmmoonnnooooonnoooppoopoopppnnpppooppppnnnmmnnnnnnnnoommmmmnnnnnnnnnnnnnnnnnnoonnnnnnnnnoppooooooopoonnnoooopppppooooooopqqqqonnmmoonnnoonnnnnnnnnnnnnnnnnnoommmnnnnnnnnnmnnmmmmmnnnnmmmnnnnnnnnoonnooooonooooooopprrpnnooooopppoooooonooppoppoonppoooooppnooppoooooqqopppppppppppppppppppppqppppoqqqqqpppproooooonoonnonnoooooooooooooooppooooopppppoooooooppoppooooopppoopppppooppppppppqqqqpppqqrnnnnnnnnnnnnnnnnnnnnnnnnoonnnnnnnnppnnoooooooooonnnoonoooopponnoooooooooooooooooooooooopoonnpooooonnooollppooommooooooopnnnnonnnnnnnoooooooppoooppopppppooppoopoooooooqqoppppoqqoonnooommoppnnoppoooppnnooooonnpooooqoooooppppoooppoooooppoppoopppoonqqppqppnnqqpppooorrooooonnnoonnoonoonnooonnmnnnnnnnmmnnnnnnnnoonnnnnoonnnoooooppooonnoooppooonnqqnoonnnooppppnnnmmmnnnnnnnmmmnnoonnnnnmmnmmnnmoooonnnnnnnnmmnnnoooonpppppooooooooooooooppopppppppqqmoommnnnnnoonnnnnnnnnnnnnnnnnnoonnonnnnnnnoomoonnmmmoommnoonnnmmnnnoooopnnooopppppponnppoooppnooppooonnoooooooooooooppnnooooooooooooooopppnnoooppnnqpppppppppppqqqqqqqqrropppproooonnpoonnooooopoooooppoopppoooopppnnpppnnoppoooopooppopppppppoopoopppppppppoppppqppoornnnnnnnnnnnnnnnnnnnnnnnnnnnnnnnooooonnoooooooonnnoonnnoooonnpppoooppooooooopoopppooppoopnnoonoonnonnppooonnooonnooqnnoonooooooooopooooppnoooonooppnooooooooopppppoopppqqpoopporrnnooooooooooooooonnooooooooooooooonnoppqqonnoooooooppoppppoppppqpppppoooopqqqqppoppooqqqnnonnnnonnnnnnooonnnnnmmmmmnnnoonnmnnnnnnnoooonoommnoonnoppooooolloopoooooppppooonnoooppppnoonnonnnnmnnmmmmmoommnnnnnnmmnnmoonnkoonnnnnnnnnnoonnoooppooooooqqoooooooppooopppooppnnnnnnnmnnnnnnnnnommnnonnnnnnnnnmmnoommnnnnnmoommnnnoommnoonnmmmnnnnnooooooonoooooopooqqommoopppoooooppooonnppoqqoooppoopoooopooooppoooppopppppooppoppoopppqqppppppppppppppppproooonnoooooooooooooooooommoooooppooonnlppoooooooooqoooopooppppppppqqppqttpppppqqppqppppqnnnnnnnnnnnnnnnnnnnnnnnnmmmnnooonnnnnnoooooooooonnnoooppoooooooooooonnooooonooooooooooopppnnoqqmmonnnnonnooooooooonoonnonnoopppnnoooppoooppppoooooqppppoooooooppppppooppppppppqqppppoooooooooooooppoooppnppppnnoppppooooonooooooooooopooppopppppooppppppppppqqqqqppqqqqqooooonnoppnnnnonnooooonnonnnnmmmmmmnnmmoonoonnnooooooopponnooppooooopoooooooppoppoooppppppmnnnnmmmmmnnnmmnnnnnnnnmmnnnnnnnnnnnnnmmnnmmnnnnnpooqqnoooooooooooooooopoooopooppppprrooonnnnnnnoonnnmmonnnnnnnoonoooonnnnnoonmmoomnnnnnoommmmnnnooonnnnoooooonnnnooooooooooppooopponnpppoooooooppoopppppppppppppnnoppooooooooopooqqmoooopppppqqqoorrpppppqppppqppqqroooooopppooonnppnoonnnppoooopoooooooooooooooppnnooooooopqqqqqpppppppppprrqqpppppqqpqqpprnnnnnnnnnnnnnnnnnnnnnnoonnonnnnnoonnoonooooonnooonnoooppppooooopppoopppoooopooppnooppoopnnoonnnoooooooonnooooooooooooppooonnoppnnnnnoooooppooopppponnooooooooopooppoppppppppppqqppoooooooooooonnnppooooopooooooooonnooonnonnoopppppoooppoopppoopssqqqooppppppppppppqqoppooonnqqmoooonnoooooonnmmnnnnnnnnnnnnnoonnnooooonnooonnnnooooooopooppooooooooppoppppooooooonnnnnonnnnnnnnnonnoonnonnnnmmmnnnmmmmnnnnnmmnnnqqpooooooooopooooooooopppoooopooppqpprronnnnoonoonnnmmnnnoonnnnnnnnnnnnnnnmmnnlnnoonmmmmnnnnnnnnnnnnonnmmooooonppoopooppoopooppoppqqonnooooopppppoooomoopppooppoooppoppppooooopppppoooqqpppppppppqpppppooqqqqqpppppoorppooooooooopoonnooonnpnnoooooooooooooooooppoooppoopppppoqqooppppppppppoqqqqppqppppqppqqrnnnnnnnnnnnnnnnnnnnnnnoommooonnooonnnnooonnooonnonnoonppoonnoppppoooooonnoopqqooooooopppnnoonnnoonnnoooppooooooonnonnooooooomoooooppnnooooonnooooonoopppppooppqppooooopppoopppqqppnnpoooooppqqnoonnooooopooooppnnnoooppooooopppppppooppppponnpppppppqppppppppppppppppqrrppnnnnnnoonnoonooooonnnnnnnnnnnnoonnnoonnooooonnnmmonnppoppppppooooooppppoppoooppoooppppoomnnnnnnnmmnnnoonnnnnnnoppoomnnnnnnnppnnnnnooonnnnooooopoopppnnoooppppoooppooppppppppqqnmmoooonoooonnnnnonnnnmmmnnonnnnnnnnnnnnnnnnnnnnnnnnnnnnnmmnnommoooooppoppppmppoooopooqqonnooooonnoooooooooonnooooooppppoppoooooppooqppoopppppppppppqqppppqqqppqrrqqpppooqppppqnnoooooppoooppppoooooooooooopooppooonnoooooooorroooooppnppoooppppoppqqqqqppqqpppqqpppqqqnnnnnnnnnnnnnnnnnnnnnnnnooooooonooooooooooooooooonnoonooooppoooooooooonooooooooopoooooopnnoooooooonnpponnqqoooooooonnooooonnooonnooooooooppoooooooopppppoooooooppppppppppppoopqqppoooppoopnnoooooppoppooooooooooppoopoooopppoooooppoooppnnpooooppppppppppqppppqqoppqqqqqnnnooqqooonnmmonnoonnnooonnnnmnnnnmnnmmnnmnnooooonnnoonnoooppoopnnoopppnnooonnooooooppppppnnnnnnnnnnnnnnnnmmnnnnnmmnnnmmmmnnnnnnnnnnnnnoooopmmppooooopppoopooppoopppnnoppoooooqqommnnnnnooppnnnnnnnnnnommnnnnnmmnnmnnnnmnnmmnoonnnnnnnnnonnnnnoonnoppoooooooooommoopooppooooooooppooooonnooooopppoopppooooooopoooooopppoopnnppqpppppooqqppppppppqqqqqppqqpooppqoooooopnnoopppooooooopoopppppooppooooooqqoopoonnoopoooopqqpppppppoppppqqqooppqppooqqqqqrnnnnnnnnnnnnnnnnnnnnnnnnpponnooonnoonnonnoooooooooopppoooooooppoonooppoooooooopppooppoopnnoooppooonnoonoooonnnooooonnoopoooonppppooonnooooopppoooooppoooppooppoppppooooopppppoqqoopponnooooooopooppoooppooooooopppoooooooonnoooppoooonooooppppppppoopooppopppppppppooqrrqqnnnooooonnoomnnnnnoommonnoonnnooommnnnnnnnnnonnnnoooooonnppoooooooooooopppoopppoopkkppoonnnnnnnnmmnnnnnnnnoooonnnnnnnnnnnoonnnoooonnonnoonnnooooooooooppooonnppooooopppooqpprrooonnnnnoonnmoonnonnoonoonnnnnmmoonnnmmmnnnnnnnnnmnnnnnnnnnoonnnnnooooooppnnooooooopppppoooooonnppnoonnoooooppnppppoppoopppoopoooopppppoopooppnpppppppppoopppppoppppqqqppqqqppqoooooooppooooooooppppooooonnpoopppoonnpoooooppppoooppppoppppopppppppqqqqqppqqpqqppqppqqqnnnnnnnnnnnnnnnnnnnnnnoooonoooopoonnoonooooooooooooooooonnoopoonnpooppnoooooooooooooopppooooooonnoppoonooppppooooooppnnnnnooooonnoooppooooopppppoooooqqoooppoooppoooppooooopppppppoooppoooooooommpppppnnoppoopppoopponnoooooppoooooppqpppppppooqqqppqppqqpqqoorrpppqqqqqoonoooopppoooonppmmnmmnnonnnnnnnnnnmmnnnnnnnnnmoonnooooonoooooooooooooooopoooooppoooooqqqqnnnoonoooonnnmmnnnnnnnnnnmmnoonnnoommommmmnnooooooooooooooonoopponnppooooopppqqqqpqqrrmoonnnnnnnnnmoonnnnnnnnmmnnmmmoonnnnnqqnnnmmonnnnmmmnnnnmnnnnnnnoonppoopooppoooppoooooqqooooooppoooooppqqooooooooppooooooooqqoooooppoooooqpppppppoooppppoopppppqppppoqqqqqqqqqqoooonnonnnnopppppppnnoooppppoppooooooooppoooppoooooppppppppprppppqppppoppppppqqqrrpqqppqnnnnnnnnnnnnnnnnnnnnnnnnnnonnoonnnnnnnnnnnnnooooonnppoooppoopnnppnppppooopppooooooonnnnpooooooonnnppooonnooppoooooooooooooppqoooopooooooooopppppooonnoooppppoopooppooooooppoopppoooopooooooooonoonnnooppnoopppponnoooppnnoooppopprroopoooopppppnoooopqqoopppqqpppqqpppppoonppoonoonnoonoonnnnnppmoonnnmmoonmmnnnnooonnnnnnnonnnnooooooooppooqoooooooppooooooppoooonnnnnonnnnmoooonoonnmmnnnnnnoonnnppnnonnnnnnnnnnnooopppooppoooooonnppnnonnooppppppqqqqpoonnnnnnnnnnoonnnnnnnnoonnollnnnnnnnmmooooonoonnnnnoonnnnnmmonnoomoooonppoopooooqqppprrpooooooooopooooooooooopooppppppppppoopooppooooopppooppoooqqpqqoooopppppqpppppppppqqqppqnnoopponnoooppooooooopoooonnpooppooooooppooqooppooooooooppoopooppoppqqqqqppqqpppqqqrrpprnnnnnnnnnnnnnnnnnnnnnnnnoopoonnnooooooooooooooqqoooppoooppoooooooooopppoooooppppoooooooqnnnnooooooppqqooooooonoooooooppooooonoooooooooppooonnnppooopppppppnnpppppppoqqppoppqqpqqooooooooooooppoppoonoonnooooooopppppoooppopppponnooooopppppppnnpqqooqqqpppppppqqqrrqqqqqoooooooonnoonnnoooonnnmmnnnmmnnnnnnnnnnoonnnnnonnnnnoonnpoooonnooopppooooooopppooppoppppoonmmnnpnnnnmnnmmnnnnnoomnnoopmmnnnnnmmnnnmmnnonnoopoooooooppoppppoooppppopppppooppoooqqonnnnnnnnnkknoonnommnnnmmnnnnnoonnlnnmmmnnmmnnnooonnnnnnmoonnonnnnoooooooopponnqqoooooppnoopppoooopoonnoopoopponnoooooooopppppnnoooooppoopqqqqqppoopppqqoorppqqpqqqqrppqqqppqqqooooooooooonooooooooooooooooooooopooppoppnnpoooooopooppoooppooopppqqpppppppqqqqqpppoopprnnnnnnnnnnnnnnnnnnnnnnoonnoooooonnoonnooooooooooooooonooooooooooooppoonooooooooopooooppqooooonnpppooooooooooonnnnnooonnonnnnooopponnnnppooopppoooopoopppppppoopppooppppppppoooqqoooonooooooonnooooopnnoooooooppooonnoppppoppoooppppppppppppoopppppqqqppppprrssqqpppqqqrrooonnnnooonnoonnnnnonnnnonnooooooonoonnnnonnoonoonnpooppoooppooopppppppoonoopppppooppppppponnnnnoommnoonnnnnnnnnnnnoonnnnnqnnnnnoonnnnoooppoppppoppoooppoonooppnnpoooopppppqppqqooonnnnmnnooonnnnnnnnnnmmnnnnnnnnnnnnnnnmmnnnnnoonnnmmnnooooonmmooopppppppoooooooooopppppppoooooooooooopppooppoppoopoonnooopppppppppqooooqppoopppoopppppppoppqqpooooqqqppqpppproooooopoonnnpppppooooooooopppooppooopppppoooooooppoooooppppppppppopppppppppqqqqqqqrppqqrnnnnnnnnnnnnnnnnnnnnnnoooonnnmmonnoooonnnooooooopppoooppoooonooooooooooooooooooopooppooqoonnooommoooooooooooooooooooonnonnnnoooooooommppooonnpoooooppoopqqpppppppoooqqpppppoooqqooppooooopooppooopponnnnoppoooopppmmooopppoooopoopppppppmmqppppppppppqqppqpppppppppppprrnnmoonnnoommmmnnnnnmoonnonnmmmnnnnonnmmoonnnoonoooonoooooppppnnoppppoooppooooonpppppooqqoonnnnnnoooonmmnnnnnoonnnnnnnonnnnnmmnnnnnmmoomoonnnppooooopppppoooooppoopppppoppqqpppqqnnnnnnnonnnnonnoonooooommnnonnmmoonnnoonnnnnnnnoomnnnnmmnmmnnonnoonoonnonnooooooooopnnqqpooppooooooppoooooooooonnpppqqoopoopppppoooooppooppppppqqooqqqnnppppppppppppppppppqqqqrppppoooooppooooopppoooppoooopoooopooooooooooooooppqppqqpppppprrpppooqqopppppppqqpppqqpprnnnnnnnnnnnnnnnnnnnnnnoonnnnnooooooooonoooooooooonnoooooppoooppoopppppooopppllppoooppoopooppnoonnooooopoooonnooooopppnnonnoopoooooooooooqoonnpooooopppppppppppppppppooooqppppoqqooooopppponnoooooppnooooonnoooopoonnoppoopooppoppooppoppooooopppqqqqoqqrrpppqqppqpprrpppooonnooonnoooooooooonnnnnnnoonnnnnonnmmppnnnnnnooooonnoonppoooooppppoppoopooooooooooooppoonoooonnnmmnnnnnnnnnnnnnmmnnnnnmmnmmnnonnnnnnnnnoonppoooppnnooopppooppppooopppooqqpqqppommmmnnooooonnnoonnnooonnoomnnoonnnllooonnnnollnnmnnnnnnnnnnnnnnnnoppoopooppoppoonnoooqqpppooooooopnnoooooppoooppoooqqooopppppnnpppppoopppppppooopppooppppppppppppqqqqqqqpppqqqoooooooppoooppooooooooooooppoooppoooppooooooppoooopppoopoooooqqqqppppppoopppppppqqqqqqqrnnnnnnnnnnnnnnnnnnnnnnoonnnnnppnnnnnoonoooonppoonooooonnoooopppooooooooooppoqqppoppooooroonnnqqnnoooooooooonnooooonoooooooooooooooooooppooonnoooooooooopooppqqpppqqpoooopqqppmqqpppppoooopooppqppoooppoopppoopppooppooooooppoooppppppnpppppooppqqqpppppqqoppqqqqqqqppqrrppooooonoonnoonnnnnnnnoonnnnnnmmmmnmmoonnnnnoonmmnnpooooooooonnpoooooppooopppppoooooppqqppnnnnnnoonnnnnmmonnnnoommmnnnoommlnnoonmmoonnnnnnnpoopppoonnonnoooooppoooooppppppppppqqonnmmmmonnooommooonnnnmnnnnnoonnnnnnnnnnnnnnnnnnnnmmnnoonnnnnnoonnooopppnnppoppoopppooppoooooonnooorroooooooppoooppooooopppnnpooppoopooppoppoopooppoqqqqppqppqqqpppppqqqqqqqppqooooppoooppppppppoooooppppppnoooooooooooooooooppooppppppooqqpppppopppppppppqqpppppqqqpprnnnnnnnnnnnnnnnnnnnnnnnnoonnnnnonnoonnnnnooonnoooppooooooopppnnoopooppoooppooooopppooooooooonooppoppppnooppmmonnoonoooonoooonppoooppppoooooooooooopoooooppqqppoppnnpooooppppppqqpppppppppppppppoopppoopppooppoopoooopooppooooooppoooopooppoppnnpppqqpqqqqpppppqqqppqqpqqnnonnooonnmmnnonnoonooooonnmmnnnnnnoonnnnnoonnooooonnnoooooppooooooopnnqqpooooooooooppppooonnnnnllnnmnnooonnnnoonnnnnnnnnnnoonnnoonnnnnoonnoooooooooooppooooooooonppppooopppppqqonnnnmmooonnnnnnnnoonnnoommonnmmoonnnnnnnnnnnnnnnonnnnmmooommnnnnnooooooooooooooooopoopppoopppoooonooooooonnoooppppooopppnnpppnnppoopoopppqqppppppppoopppppppooqqqqqqqqppprrqqrppppppoooooopppppoopppppppooonnoopoooonppoooppooppooooopqqqqpppppppppppppppqqpppqqqqqrrrnnnnnnnnnnnnnnnnnnnnnnnnoonppoonmmnnnnonnooooonnoooooooooonnooooooppoooooppoppoooppppoopoooonnnppooommnoonnoooooooooooonppoonoonnqooppppnoooopoopppoooooppoooonooppoppqqopppppqqoopppooppnppooooooopoonnoppnnooppppppooppoooppoppooppoqqppopppppppqqqppqqpqqppqqpppqqqqqooooonnooooopponnnnooonnnoooonnnnnonnppoonoonnonnoonoooonooppppooonnonnoooooppooopppoooonnnnnnnnnnnnnnnnnmnnnnnnnnnmmmnnoonooqqonnnnoonoooonppooooooonppqqpooooooooooopppooppprrnnnnnooonnnnoooooonnnnnnnnnnnnnnoonoooonoonnnnnooooooonnonnoonoonnoppoonoopppooppnnopppppppooppppppmmooppoppooooooonppppppppppppooppqoopppoopppppppqpppppppqqqqpppqqppppppqqqqqoooooooqqoopppppoppppoppoopppoopppooppoppppoppppoopppqqppppppqqpppqqppqqqppppqqqpppqqpprnnnnnnnnnnnnnnnnnnnnnnnnoonnnnnpppooppnnnoonnnnnooooopppppoooooooooopppppppooooooppoooopoooonoooooppoopoonnoooooppooooonppnnoppoopoooonnnooppoooooooooooppppooonnoopnnoopppppqqqppoooooooonnoopoooopoopppoooooooooooonnooooopppppoopppqqpppooqqpqqooprrqqqppppppqpppprqqppoooooooonnnnoooppooooonnnooonnnnmnnoonnonnnnnnnnnoooooonnppoonppoopooooooooopppoooppppppmoonnnnnnnonnmmonnoonnnmmnnnnnnnonnnnnoommnnnnnoooooppooooooppoopppoopppppoopooqqpppqqonnoonnnnnoonnnoommmooonnoomnnooooommmmnmmnnommnnmnnoommnoonnnnnnnooooooppppoppoooopppqqopppppooooonnooppoppooonnooppppppooppoppoooopooppppppppppqqpooooqqpqqqqrqqqqpppqqqqqqqqppppnnoqqooooooooppnnooooooopoooooooppqoooooppooppooopppooppqqqpppppqqpppqqqqqppppqqqpprnnnnnnnnnnnnnnnnnnnnnnnnnnooonnnoonnooonnmmnoonnpooppooonnooooooopoooopppoopoooopppppooqoonnonnppooooooooppnnooooonnnnnnnnppooonnoppnnooooooooooooooooopooooooqppooopppppqqppqppooppoooooooooooooooooonnoppoopppoooopooooooooooppoopppppooopppppppqqpppqqqqqqqqqqppqqqqqooooooonooooooonnmmnoonnnnnoomnnnnnnnnnnnooonnnppnnnooooooooooooppooopppppppnnpppooonnppppnnnoonoonnmnnoonmmnnoomnnoonnnoonnnnnnmmnnnnnoonnonnpppoooopoooopooqqoopppppppppppppqqooooonnnoooonoonnnmmooonnoomnnnnnnnnnnnmoonnmnnnnnnnnnnnnnnnnnoonnooooopppnnmooooppoppppoooppooooopppppppoooppoppppnppooppppppooppqqoooooqooppppppppqqqqppqqqoopqqqqpqqppqqqqqrppppooooooopppoooooppooopppppppoopoopppoooooooppoopoorroppqqpppppppppppppooqqpqqppqqqpprnnnnnnnnnnnnnnnnnnnnnnnnnnnoonnnoonnnnpnnoopoooonnnoooppppppoooooooooopnnooooooopooooppqppnnonnnnonnooooooopponnoopoooooooppnnnpppppppoopooooooopppqqoooppppppoooppppppppqqpppqqoopppnnnnpooooonnppooooooppoooooppooooopppppooopppppppoooopppqqqooqqpppppqrrqqpppppppqqqoooppnnonnnnoomnnnnoppoonnnnnnnnnnonnooooommnnnnnooooonnoppppppnoopponnoopoonnooooooppppppmnnnnnnnoonnnnnnnnnnnnnoonnnnnnnonnoonoooooonqqoooppppoppppoppoopppooooopppppppppqppqqooooonnnnnoonoonnnnnmmnnnnnnmmnnnnnllnnnoonnooonnooooooonnnoonoonnoppoopppoopppooppqppqqpppooopppppooppoopppppooooooppoopppppooopppppppppopppppppooppppppppqqppqqqppqqqqqpqqqqqoooooooqqoooppooooopppppnnpppooppooooopppppnqqppppqppoooppppoqqpppqqpprppqqppqqqppprrqqrnnnnnnnnnnnnnnnnnnnnnnnnnnonnnnonnooooonnooooonnoooooonnoooopnnoooppooooopppoooopooqqooqoooopooooooooooooooooooooopoooooooppoooooooooooooppoonoopppppoopppppoonppppqppppppppppqqooppooopppppppooooooooooooooooonoopppppnnooooopppooooppppppppooqpppppqqppqppqqpppppqqqqqooonnoonnnnnpponnoonoooonnnooonnnnmnnnnnnnnnmmonnnnoooooonnppoooppoonnnoonnnooooooooqqppoonmmnnnoooonoooonnnnnmmnmmooonnnnnnnnnnnnooooonnppnooppoooppoooooooooopponnpppqqpppooqqnoonnnnooooomnnooonnnnommnnnoonnnnnnnppnoonnnnnnnnoonnmmnnnnnooooonoooopoooopooooooppprrooooopooppoppppppoppppooopppppppooopppooooppoppppoppppoppoopppqqoopppqqppppppppqqqqqpprppppoooooppnoooopoooooooppoooppppoooppoooppoppppppoppqqpppoopqqpppqqpppppppppqqqqqpppqqrnnnnnnnnnnnnnnnnnnnnnnnnnnnnnooooommoonoooooooppnoopppooppoooooooopppppooppoooppoooppppqooooonnoooooooooonnnnoooooonnoopnnooooooooooooooppppppoopppooppoooqqpppooppopppppppppqrroooopppoopppoopppoooppoooooooooooooooooppnppppoppooooqooqqpppooqpppppqqppnppqqqqppppppqqppnoooonooppnnonnoooooppnoonnmoonnooonnnnnmmnnooooonoonnnoooooonppoooooooonnpppoooooooppooonnnnnnnoonoonnnnnoonnnnnnnnnnmmonnnnmoonnooonnnnoppooooonnpooppoooooooppppppppooqppqqonnnnoonnnoonnnnnonnnnnmmoonoonnnnnoonnnnnnnnoonnmoonnnnnnnnnonnoonoooopnnooonnpppponnppqpppppppoonooppppopppppqqpppooppooooopooppooopppppqqpppppppqooppqqpppppnppqqqqqqqqqqqqroooooopoooopooqqoppoopooppppoppoopooppooopppooooqqnppppppppppppqqpqqppqqqppqqqqqppqppqqrnnnnnnnnnnnnnnnnnnnnnnnnnnpnnoopoooooonnnnnmppoooooppoooooooooooooqqoooooppooooopppooppqppooonnnnooooopooppoonooooooooonooppoooppoppppoopppooooooooooppooopppppppooooopppppppprrppppoppppooopponnrrnppppoppppoopppoooppooooooopppppooqppppnqqpppppppqqqqqpqqqqqqpppqqrppnnpoooooooooooooooonnnooonnnnnoonnooonnnnnnnnnoooooooonnooonnppooollnoooooppppopppppnnppppnnnnnmnnoonnnmmmppppoonnnnnnmmooonnnnnnnnnnnonnnnoooqqpoopppoooooppnnpppppoopqqqqnqqppooonnnnnnnooooonnnnnnnommoonnnmmnnnnnnnonnnnnoonnnnnnnoonmmnnoooooooooooppoopnnoopppppppoooooooooopqqppooppppppnnppoooppppppppoopppppppppppppppoopppppppppqpppprqqppppppppqqqqqppoopppoooooppooroooopoooooooooqqpnnpppoopppppnnoopppppoppppppppppppppqooqqpppppqqqqqpprnnnnnnnnnnnnnnnnnnnnnnnnoonmmoonnnoooopoonnoooooonnoooooooppooopppoonnpppnnpppoooooppppqoonnooonnnooppooooooooppooonnooooooopoooonppooppppppppoooooppoopppppoopppppppppppoopppqqoopppooooooonnoooooppppprooooooooooopoooooppnnpooppppppppppppoooqqppppppppqqqqqqpqqqqqrrnnnoooonoooooonoonnnoonnnnnmmonnnnnnnoonnnoonnnoooonooppppppppppoooopooppooooopoopppppppoonoonnnnnmmnnnnnommoonnmmmnnnoooonmmnnnnnnnnnnooooonnoopoooonoooonoonnpppqqppoqqqqqppqqnnnnnnnonnnnnnnnnnmmnnommnnnnnnnnnonnnnnnnoonoonnnnnnnoomnnnnmnnnnoooppooonnonnqqooqoorrpooooqoooopooooppnppoooppoooppooopppppqqppqqpoopppppqqqpppppqqqqqqqpppprppppqppqqqppppqooooooooopppoooooppooqppppppoppooqooooooooooppppooppppppppoopppqqppppppqqqqpprppooqrrqqrnnnnnnnnnnnnnnnnnnnnnnnnnnooonnoppooooooopponnoopppooooooooopppoooppoopoopppoopppppppqqqooooooonnoooooooonnooooopppoooopoooonppnnooooooooooooooooonppoooqqqqpppoommpppooqppppoqqoooopoooopnnnnooooopnnooopppppponnppoooppoooppoppoopppppppppppppqqppqqqqqpppqqqqpppppqqqnnonnnnoppooooonnnnoooooonnoonnnnnnoooonnoppooooonnnnnoooppppoooooppqppoooppppqppppoppppoonoonnnmmnnnnnnnonnmmoonnnnnnnnmmmnnmmnnnnnoooppnnoppoooooooooopppooooooppppppppppooorrnoonnnnonnmmnnnoomoooonoonnooonnmmommmmonnnnnoonnnnnnnnnnnnnnnnnnnpoooopppoooooooooopppppoopppoooopooppoooooppoppnnpoopppoopppooppnnooopppppoooppppqqqqqpppqqqqqppppqqqqqqpppprooppoopooooonnooopppppooooooooopppoopppppoooooqqpppoooopooppppppppppqqqqqpppppqqrrqqqqqsnnnnnnnnnnnnnnnnnnnnnnnnnnonnoooppooooonnppooooooooppooooooooppoopppoopoooooooppoppoopppoooooooppnoooonqqooooonnnnnoonnpppooooooooppppooopppppppoooppppqppqqppooooopqqppoppooqqqppppooooooooooooopppooppqooppoopnnoonppoopooppnoonnoopoooooqqpppppqqqppppqppqqqqqqqppprroooppoopoooooooppoonnnnnooonnonnoonnnnnnnloooonoooooppooooooopppppooopppppooppopppppppqqppnnnnnooonnnnnooooooommonnoonnnnnonnnnmnnmmnnnoooooppoopppoooooppoppppooqooppppppppppqqnoommooonnooooommnnnnnnoooonnnnnnnnnnoonnnnnnoonnnnnmmnnonnmmnooooppppponnppoooppppppppppooppooooopooppoooppoopoopppppppoqqppppppppppppooqpppppqqppqppppppprrpppqqooprrppqqqqqrppqqppooopppooppnoopppppooppnpppppnnpppooppoppooppopppppqqppqooppqppqqpppqqqqqqqpprpppprnnnnnnnnnnnnnnnnnnnnnnnnnnoooooooonnoonppooooooooooppoppnnnnooooopppoooqqpppnnppqqqoooopqqoopoonnooooooooppnnopppponnoonoooonoooooppooppoppoopooppoppoooqqpppppppooprrqqpoopppqqppoonoopppoooooppoopppoooppooooppppppoooopppppoooooqqqqqppppppppppppqppppqppqqpppqqpprrrooonnoonoooonnoooooonnoooooooonnooonnooooonnnnooonnooonnonnppoopppppoooqqpoooopooppooommqqnnnooooonnnnnooommmmnnnoonnoooooonnnnnnnnnnnnnnpppoopponnppoppoooppooppopppppqqpppqqqqoooqqnnnnnooonnppnnnnnnnnnnnnnoonnooonnommnnmnnnnnoooonnonnnnnnnooommpppoooooooooppopppppppoopoooopooqqpppppoopooppoppooppppppooppoopooppoppppoppoopnnpppppqqppqqqppqqqqqpqqqqrooooppoppppnppooonnppoooooppoooppoppnnpppoooooppooqoopppqqppoppppqooqqpppppqqqqqppppprrrnnnnnnnnnnnnnnnnnnnnnnnnnnooonnnoooopponnnnoooppoppppnoooooopooooppppppoonnpoooopppppooqooooonnooonnoooooppqqpoooooooooooopppoooooooooppooooooooqqpppppoppooppoppppqppppppppppqqoonnooooooppoopppppqooooooonnppoppoopoooopooppooooopppppqqpqqpppoooopppppqppqqqqqppqqqqqoooppppnoooopponnooonnoomooooonnnnloonnnnooonnnooooonnqqpoooooopoooopoopppppoopoopppppppppmmmnnmnnnnonnmmnoooonnoppnnonnnnnnnnnooooonnonnoooppoonoopppoooooqqppoopqqppopppppqqrrnoommnnonnoomqqnnnnnooonnoonoooonnnoooonmmnnnmmnnnoooonnonnnnmnnoooppooooooopppooppoppqqpooooppppppoonnpppooooopppppppppppppppppppoopoooopnnqqpppppprrppqqqppqqpppppqppqqqqqsssppoopppoopppooppoqqpppppppoopoopppppppooooooooooppoppppppppppooppoqqppqpprrpppqqpprppqqrnnnnnnnnnnnnnnnnnnnnnnnnnnoooooooooonnoooppoooooooooopoooooooppppooopppoooooppppooooopprooppnppnnoppppoooooooooooonooooqoooooppoooppppoonoooopppppoooppoooppoooppooppppppqqppoqqooppoppoooooppoooppoooooqoonnoooooppppppppppooopppppppoopppqqpppqqqqqppppqppqqpppqqppqrrooonnnnoppnnooooooopnnnnnnnnnnoonnnoonnnnnoooooooooooooopoooooooppooopppppppppppppppoonnppnnnmmnoonnonnoonnnmmoonnnnnnllnnnoonnnnnmmnnoooooonnppoppppooopppppoopppppppoppppqppqqooonnnnnoonnnoonnnnnnnonnoonnnqqnnmnnoonoonnnoooonoonnnnnoonnnnnooooonnpoooooppnnnnpppqqpppoooppoopppooppooooopoopppppooopppppqqppooqpppppppppoppppppprrppqppqqqqqppqqqqqpqqqqrooppnnoppoooppoooooppoppppppooopppooppoppoopppppoopooqqppppppppoopppppqppqqpprqqqqqqqqqrnnnnnnnnnnnnnnnnnnnnnnnnooooooonmmnnnnooonnoppoopppoopnnppoooooppopppponnppopppppppppooqoonnpoooooppppommppoooppooonnoopoooonoooooppooooqppppoppoopppooqppooooopppppooppppppporrooppooooopppppoppoooppnnpppqqpppppooooooooooppoooqqoopppppoqqppopppppooqqqppqqqqpqqqqqqqooooonnooonnoonooooonnooonnnnonnnnnnnoooonnnooonnoornnnnoppppppooooopoooooppppopppppooppppoooooonnooonnooonnnnnnnnnnnnnnooonnnnnoooonnonnoonkkoooooqqooooopppoooopooppqqqppqpprronnoonnnoooonnnoonnnnnnoonnnoooonnnoonnonnnnnnnnnoooooooooonnnnnnnoooppoqqpppppnnpppoorropppppppppoqqpppponnppqooooopppppooppqpppppppoopppppppppppppqqppppqrrqqpppqqqppqqqqqqqrppooppopppppoooooppoopppppppoppooqppoooppoopppppqqoppooqppooppppppppqqqqqqqppqqqqqqqqqqqnnnnnnnnnnnnnnnnnnnnnnnnooooonnoppppoonoooonnnoooppooooooopppooooooopppoopppqqooqppoopppooooonnoooppooonnoooonooooopppppoooopooooooooooooppqqpppppooopppppoopppqqpppoopppppppprroooopooooooooooppoopppoooppoopppooooqooppooooopppoopppqqqqpqqpppooppqqqqqqqqqqqqqqqqqpqqoooooooooooonnnooooooonnnnnnnonnnnmoooonnnnnoooooppoppoooooppoopppppoooooooooopppoooooppppnnnnnnnnnnnoonnnoonnoonnnnnnnnooommnnnnnppnnooooopoopppoonnopppppppooooopprrpppppqpprrooooonnonnnnnppoonoonnonnmmsnnnnnnnnnmmooonnnnnnnonnoonnonnmmooonnoooppopppppppppooopppppoooopnnppoppoopppqqooppppppooppopppppppppnnoppoopooqqpppppqppqqqqqqqpppqqqqpooqqqqqqqrooppoopooppqpppppoopppppooooppppppooooooooooooppppqoopppqqqqpppqqpqqqqpooqqrrqqqppqqqqqrnnnnnnnnnnnnnnnnnnnnnnnnnnoooooonnoonnpnnooonnpppppoooooooooppppppppppppppppqqppoppnnoopooppoppmmpoooooppooppooooooooooooopppoooopooppoooppppoppoooooooqpppppppppppppppppppppqqqooooooopppoooooppppoqqppoppoooooooppooooopooppppppppppooqqpqqpppqqqqpppqqqqqqqppqppqqqrroonoonnnoonnoomooooonnnnommmmnooooooonnoonoooonooppnoooooooppmmpoooopppnnoppooooooopppppppnnnnnmnnoonoonnommnnooooonnmoonnoooooonnnnnnnnnoonppnnoppoopoopppppoopppoopppooqqqpprronnnnnnooonnonnnnnppoonnnnnnooppmmnooooonnnnonnnnnooooooooonnonnoonoopppppoooppoooooppppoppoopppoopppnnppoppoooppoooooppppppppppppoopqqoopqqpppppqqpppqqqqpqqrrpqqqqrppqqpqqqqrooppoopppooopppppoooopppoopppppppoppooqppooonnpppppppppqppppqppqqoppppqqqppqqrqqqqqqqqqrnnnnnnnnnnnnnnnnnnnnnnnnoooooppooooonnnooooooooonooppoppppoopooooopppppooppoooppoppppppqoonnnooppooonnoppppppnooooooopppoopppppoopooppppooopponnoooqqpppqqppqqpooppppppppppppprroonnooooonooooppppppppppqoopppporrpppooooopppppppppppqppppppppppqqpppttqqpppqqppqqqqqqqqppooooonnnoonnoooooonnooonnoonnnnnnoooonnoooooonnoopnnoooppoooopppqqoooppoqqpppqqppoppppppnnnnnnoonnonnnnooooonnnnnnnooonnnnnmmnnnooooonnooooooooppooopppppppooppoooqqpoopppttqqonnoommnoooonoonnonnnnonnnnonnnnoooooooonnnnmnnppnnnnnooonnnnnoooooppppnpppppoooopppppqqpooppppppppppoopppppooqppppoooooqppoooppqqqqopppppppppppppppqqppppqppppqppqqqqqqqrppqqrppppoopppppooopppqqppooooopppqqpppppooooopppooqqoopppppqoopppppqqqppppqqqooqqqppppqpprrrnnnnnnnnnnnnnnnnnnnnnnnnppoooooonnoonnonnppooonnpoopppooooqqooopppooppoppoopqqnnpppoooopppooooooooooppoooppoonppoonppoonoonnoooooooooooooooppooooopppooqppoopppppoopoopppppppoppooppooooopooppooooopoopppppppqqoppoooqqqqooooopooppppqpppporrpppppqqqppppqpprrqqppprrprrnnooooooooooooooooonnnooooooonnnnnonnnnoonmmooooonnpooppoqqooooooopppnnpponnoopnnoopppppoonooooonnnnnnnnnonnoonnooonnnoonnmoonnonnoonnmoopppoooooooooqppppppppppppppoopppoopqqrronnnnmmnnnoonnnnnonnnnnnnnnnoonnnnonnnnonnnnnnnnnonnnnnnnnnllonnooooopppppqqpppppoooooqqppppppppppnooppppoppooqpppppnnpppqqoopppppoopppppoppppoqqpppqqppqqqqqppqqqqqppprrqrrqqrmmoopppppnnoooppoppppppppppppppooooopppppppqooqqpppppqqppppprooppqppqqpqqqqqqqrrqqrqqppsnnnnnnnnnnnnnnnnnnnnnnnnoonoooonooppoopnnnnoooooopppponnppnnmoopppooppoppppoppoosppppppqnnoopoopppoooopnnoooooooppooopppppppqooppoooooooqoooooooppopppppnnoopppoopppqqppoooppqssoosspooppqppoopppoopppoooppppppoppppoooppnppoopppppoopppoopppqqpqqpprppqqqqqqqqqqqqrrpqqoooooooooooooooooooonnppnooooonnnnnnnoonnoooooonnnnnppoopoorroopoooopooooopppppoooooppppppnnnnnnnnnnoooooommooppnmmoonnnnnoppppmoooonnonnooooooooppnnpqqppnppppooqppppoqqppqppqqpooooooonnnnnnnnnnoooonnnoomnnooooooonnnoonnnnnooonnnnnnommnnnoonnoooqqoppoopooppppoooqqopppppooooqppooppoppoooppoopqqqqpppoopooooooqppppoqqpppppppqooqqppqqqqqppppppqqttppppprooooppooopppppoooppnnpppooppoppppooopppppoopppooqqpppqqpppppprrqqqppppqpppppprqqqqrqqqqrnnnnnnnnnnnnnnnnnnnnnnnnooonnmmoooppnnoppppooopppoonnooooooooppppqppooppppppooppqppppppqoooooooppooooopppooooonnoopppppoqqppoooooooopppppooqqooopppooooppppppppppppppppppppppqrrqqpppoooopnnppooopppooppopppppppoooooooqqoooqqpooqqppqppppppppppqqpppqqppppppprrqpppprrrooooooooppnnoonooooooooonnnoonnnoonoooonnnoooonooooonnooqppppooppppppppoooooooommpppppqqooonnoonnnoonnnmmnoommnnnnnoonnnpponnnnnnnoonnnoonnoppnnppppppppoooooppooopppppqqppppprrooonnnnnoooonnnnnooonnnmmnnpooooooooonnnnnnnonnoonoonnooonnnnonnoooppnnopppppppoooooooqqpooppooopppooqqppooopppppppppppppoopppppooqqoqqppoppppqqqppqppppqqpppqqqppppqppqqqppqqrppoooopooppoooppoppooopppppppppoopppoopppppoppqqoopqqppqqqppoppqqpqqqqqqqqqqqqqqqqqqqqqrnnnnnnnnnnnnnnnnnnnnnnnnoonooooonnoooonooppoppoopoopppooppppooopppppoopppppoooppppppppprooooonnpppppoooooooppoooooooonnonnppopppppppooooooooooppoooppppoppooqqoqqpppqqqqpqqpppqqpppppoooopppooooonnqppppoppppoopppoooooppqooppopppppppppqqqppqqoqqqqpqqqqpqqqqpppqqqqqrrnnoooooooonnppoooooonnnnnnnnnnnnnnnooppnnooonnoooooooooopppppooppppppppppqnnpppppoopqqqqoonnnnnnoonnnoonnooonnooooooonppnnnoonnmoonnooooooooppoopooppooooopppooppqppppqooqqpqqqqooooooonnnooonnoonoonnnnnnnnnnnnoonooppnnnooooooonoonnnnooonnnnnooooooooppppooopppppooqqpqqppoppppoppooppppppppppppoppppoppppppppppppppqqpqqqqpooppqpppppppqqppqppqqpppppqqqrrsooppppooooopppooooooopoooopppooppoppooppppppppooppppppppooqqqppppqqqpppqqqqqqpppppqppqqsnnnnnnnnnnnnnnnnnnnnnnnnooooooopoooooonppnnpooppoppoopooppoopooqqpppppmppppppppppoooopppoooopoooonppoopooooooooonnoooppnooooooooopooooppooooopppooooooooooppppqooppqpppppppqqpqqooppppppppppoopqqoopooqqooopppppooqqnoooopppppqooqqpppooppqppppqqqpppqqqqqssppqqqppqqqqqooooooooppnnoooppppoooooonnoonoonnooonnoonnnooonnnnonnoooppooooppppppoopppppoopppppoooqqqqnnnnnnnnnnnoooonoooonnnoonnnnnoonnnnnooonnoonooppqppoooppoooppoooppnnppoqqppqppppoppqqnnnnnooooooonoonnonnnnnnnoonoonnnnooooomoonnnnnnnonnppooonnooooooopnnppooopppppppppppprroooppqppoopooppqqoppoopppppopppppppoopppppqqpqqppppppppppppqqqqqpppppooqqqqqqqqqqqppqqrppqqpppppooppppppooppoppoopppppppoppoopppooopppppppppqqqppoopqqqqqpprrrqqqqqqqqqqqqqqrrrnnnnnnnnnnnnnnnnnnnnnnnnppooooooppooooooooopnnppooopppoooopppppppoooppoppooooooopnnppppqoooonppnnoooppoooppoopppoooooqqqppoopooppooooooopoooooppoopooqqpppoooopoopppppppqppppoqqppppqoooopppppoppppppppppooppppppppppnnoopppoopppppppoqqppqqqqqqppppqrrppoppppqqrqqrrrqqoonnnoooooppoonooooooonnooonnonnnnonnoonnonnoooppooooonnpppppppoooppoooppoqqpppppqqpqqqqppnnnqqnoooonnnnnnoooonnonnoooooooooommooooonnpoooopooppoppppppppppppppooopppppppppqpprrnoooonnnnnooonnnnpnnooonnoonoonnooonnoonnnnnpnnnnpoonnnnpoonnooonnoooqqoppoooppppppppprroppqqpoooopnnooppqoopppppppppppppqqoopooqqppqppppqqqqqpqqppoppqqqqqqqqqrqqppqqqqqqqqqqroooopppppppqppqqpoopppoopppppooppoppoopoopppqqpppppppppppppppppqqsppppqqqppqqqqqqqpqqpprnnnnnnnnnnnnnnnnnnnnnnnnoooppoooppooppoooooooopppooppoppppooooooopoopppooppppppppppppppqppoooppppooonnpoonnooooooooooppoppppoooooooonnoopppppopppppppppqppooqqpoooopppoopppppqqqoooooppoooppppoooppoppooooopppppqqoopppqqpqqqqpooppppoppppqqqpppppqqpqqrrpqqqqqqqqqpprrroooqqooonnnnoomoooonnnnnoooooooooonoommooooooooppoopoonnoooqqpppooppooooooppoopoooopooppppnoonnonnnnonnnnonnnnooooonnonnooommnnnoooooopnnoopoooopppppopppppooooppoppppqqqqqpppqqooonnnnnoopponnoonooooonnnnnnnnnnnnoonnooommnnnoonoooonnnnnnnnnnnnpppooooopppooqqnnqooppoppooqppppoooooppoppppoppppooopppppqqqooppppooonnppppppqqqqpppqqppqppqqqrrrrqqqqqpqqqqrooqqqqpoooopppoooppqqpppooooppppppnnppqqqpppqqpppppppqqpppppqqqpppppppppprrqqqppqqqqqqqrnnnnnnnnnnnnnnnnnnnnnnnnooooooonoooonnooooopoonnpnnnnooopppppppppoppoopppppopppppppooppqoonnpoooopppoonppoooopnnoomppoooppoopoopppoooooopooqqoooqqpqqoooooppppoooqqpppppqppqqqqqooppqoonnpppppppppppooooooooopppppoonpppppoooooooppppqppqqqqqpppppppoqqqqpqqqqqqqppqqrqqooopppponnppppoppooooonnonnnnnooooommnnnnonnnnoooooooooooppooppppppppooppppppppqqpppqqppppooonnooonnnoonnnoonnoonmmooonnooonnnnnoonnoonoonnoooooooooooqqllqoopppppppqqppppppppqqonnnnnnonnoonnnoooooooooooonoooooomnnmmnnnoonoooonoooooonnnnnonnoooooooooopppoooooopppqqpnnppooopppppooppoppppqppooppppppppppqppqqppqppoopqqppqpppppqqppppppprrpqqqqpqqpppqqpprppppppoppoopoooopoooooppppqqpppppooooopoopppqqppppooopppoopppppqqqqqppqqqppqqqppppqqqqqrnnnnnnnnnnnnnnnnnnnnnnnnpponnoonooppoonoonnpoonnpooppoppppppppppppooooppppppoopppooppooqoooooppppnooppoooppppoppoooooooooopppoopppooooooooooooppppppppppmmnnpppppqqpooppqqqqqqrroooopppppopppppooppqppoopqqppppooopppppoopppoopooqqpppooppqqqppqqqqqpppppqqqqqppqqqqqqqqoornnoooooppooonnoonppoonmmoomoooonnnoommoooooooooopoooopoooopppooppnpppppqqoooppppqppqqoonoonnnoonnnnnnnonnooooooooomoonnnmmooooooooonooooopppppppoooooqqoppppqqooopppppppqqqrrpoooooopnnnnoooooonnnnooonnonnnnoonoonnooonnonnoonoooonnonnooooooooppoooooooppppppppppqqoqqqqopppppppppppqoooopppppoppqqpppqqpqqooqqpqqqqpqqppqppqqpppqqqqqppqqqqqqqqqqqqqqqrrroooopppooppooooopppnnppppppppooppopppppqqpppppoooopqqppqqqqqpppooqppppqqqqqppqqqssqrrqqrnnnnnnnnnnnnnnnnnnnnnnnnlloppoooooqqoooooooooopppppppoooppoooppooppppppooppooopppooppoopoooopppnnooooooppppppoooooonnoooooppoooooooooooopqqpppoopppppoopqqqqpppqqoopoopppppppprrppoooooqqpppoooppoopqqpppppppppoppmmopprrppppppppppqqppprroqqpppqqqqqqqqqqppqqqqpppqqqqqooooooopppnnoonooooonnoonooooonnppnoooooopoooonnnnnooooopppooooooopppqqoopoooooppoonppppppnnnnnnoooopnnoonnnoonnnoonnnnnooonnoooooooooooopppoooopppoopppqqoqqppoopqqpppqqppqppqqpnnppnnnooooonnoonnnnnnoonnonnoooomoooonnnoonoonnpoonnnnonnoooooppopppppooppoooppoopppqqoooppqqqoopooppppopppppooppoppppqppoopppooppoppqqpppppppppppooppqqqqqqqpqqppqppppqqqqqrppoooopppooooooopppppoppppppooooooppppppppppppqqpppooqqppppppqqqqpqqqqqrrqqqqpqqrrqqqrrsnnnnnnnnnnnnnnnnnnnnnnnnooooopppoooooooppoooppqqoppooooopppppoopppoooopoopppoopppppppppqoooonoonnooooooppppoopppoopppnnpooooonnpppppppoopppppoppooprrpppppqqqqqppoopppppoqqqqpqqooqqpppoopqqoopqqoooppqqpoooooopppppoooppopppppooppoopppoooqqqqrqqqqqqqqqpqqqqqqpqqppprrooonnoopoonnooonnnnpnnnnnoooonoooonnnoonnnnnoonppooooonnpoopppppppppooopppppppooopppppooppooommnoonnonnoomoooommnoonnommnnonnoonqqppoooooppnpprrpppppoppooqooqqppppppppqqpppqqrrnnnooooonnooonnnnonnoonooooonnnnoonnnppnnnooooooopoommoonoonnnoooopoooooqqppqooppoooooqqpppqqpooppppppppppoooopppppqppoooppqqppppppppppoopppqqpqqppqqqppqqpqqpprqqqqqqqqqprrqqrnnppqqoppqqpppqqpoopppoommpppppppnppoopppooooooopppoopppppqqqqqppqppqqqqqpprrqppqqqqqqqrnnnnnnnnnnnnnnnnnnnnnnnnnnonnoonnnoooonoooooooppooooooooppoooppooopppppppooqppppoppqqoorppooooooopppoooppppoooooppoooqqpooppoooppoppoopppoooopoopppppoopppppppopppppppqqpppppqrroonnpppoopoooopooppopppppppppppooopppppooqoopporrpppppppppqqqqqqqqqqpppqqqqqqqpprppqqqrrooooopppoooopponnnnnnnnnonnnnoooooooonnnnoppppooonnnpppppppqqppqooppoqqoooppppppppppppppppnnnooonnoonnnnnnoooonnommnnooonnonnoonnnnnooonnnnoppppqppppooooopnnoooopqqqqqoooopqqrrpoonnnnnooooooooonnnllnnnnnnoonnooooooonooooonnnnnnnnnooooooooppoopooppqppoopppoopppppqqpppqqpoopppoopppppppppqoopppppppqpppppppppppqqqqqppppppppppqqqqqpppppppqrrppqqqrrrppqqroooopppppppooooopppooqqqpppppppqqonnppopppppppppoopqqppppppppqqqqpqqppqqqqqqqqqqrrrqqrrrnnnnnnnnnnnnnnnnnnnnnnnnnnoooooonnooppoppoopoooopoooooppooppopppppppooppppppooppoqqppooqooppoppqqqoooonoooooooooppooopppoonnoppoomooooppoppooqppppppppppppppppqpppppoopppooqqprroooooppooppppppnnpppppppoppooppooooopppoopppooppppppppqqqqqppqqppppppppqqpqqqqqqqqqqqrrrnnoooooooonnoooppooooonnooooonnnnnooooonnooooonppnnoooooooooopppppooopppppppoopppppopprrppnnnoopooooooonnmppnnoonnnooonnppnnnnnnnnoonnoppooooooooqqpppppoooppoooopoopppppoopqqssnooppnnpoooonoooonoooonooooooooooonoonnonnooonnnnnppoooonnnnnonnppoppqqopppppppooppoppqqpppoopoopppppqqpppooqqooooopqqppoppppqppppoopoooopppqqpqqppqqqqqqqqqqqqrppqqqppttqqqqqrppoopppooooqppoopppppoppppoopoopppqqpppoopppooppppppppppppqqqqqppqqqqqprrppppqqqqqrqqpprnnnnnnnnnnnnnnnnnnnnnnnnnnooooooppoooopoonnooooopppoopppppoooooppqppppqpppppppqqpppooppqooppnnnpppppppooooooooppoooppnnoooooooooooooppppopppppppoopppooqooppppqqqppppppppppppqrrooppppppppppooqoopppppqqoqqppooooooopooppopppppppoopppooppqpppppppppqppqqpppqqqqqqqqqprrppqppoooooppoopnnoooooooonnoonoonnnoooopponnnnonnnnooonnoooppooooooopppppqpppppppoopooqqpponnnnnnnnnonnppnnnnnoonoonnnoooonnnnnnoonnooonnooooooopoooopooooqooppooppppppppqqqqqrronnoooonoonnnoonnooooojooooooonnnnnoonnooonnnooooooooonnnoooooooppppppppqqppoppqqpppoorropppppooqqppppppppqqppppppppooqqppppppppoooooqqpppppppqppooqppqqqqpooqqqppppprrqqrqqpprppppppoppppoooppoppoooppqqpppqqoopoooooooqqoppooppppppprqqpprqqpppqqqqqqqrrqqqqqrrrqqrrsnnnnnnnnnnnnnnnnnnnnnnnnooooonnooooooooooppooooooooppooooooopppssoppoooooqqoqqpppppppooqooooooooopoopppppnnooopppppoopppppoooppppoppppoopppoooppqqppppppqqppqqqqqpppqqpprqqppprrpppppppoopppppppppppppoopppoooooppppoooppoppqqqooppppqppooqooqqpppqqqppsspqqqqqqprrqqqrrpponnpppnnooppooonnonnmmonnnnnoooonnnooooooonnoooooooopppppoopppoooopppqqoppppoppppqppppppooonnnooooonnoonnnnnnnmooooonnoonnnooooonnooooooooppooppppppqqppopppppppooppppppppqqqqooooooonooooooonnooonnonnooooooonnonnoonnnoonnnnnoppnnoonnnoonnnnnooooopoopppooooqqppprrpooppppppppppoooopooqqpppoooppoopppppqmmqqppsppppqppppqpppppqqqqnnqqqqqqqqqqqrrrrqqqpprooooppqppoopppppppppppppppppppppppoopppoooonppooqqppppppqqqqpqqpporrppqqqqqppqrrqqqpprrsnnnnnnnnnnnnnnnnnnnnnnnnooooooooppoooooppppooopppoooooppppoopppoopoopppppoonooppppppppproopppppppooooooppppnnoooooooopppppppooonnpooooppopppppppoooqqoopppppqqoppppppppppppqqqrrppoopppoooppppopppppppoooppnnppoppppopppppppppqppoopppppooqqqppoqqqqqppqqqqqppqqqqqqqprroonoonnoppppoopoopponnnnoooooooooonoonnnnnooooppppppoooooppoopppooqqoppooqppppooopppppqqpppoonnnoonnnnnnnoppoooonnnooooommoooooooonnnnooopppppooppppppppqqqqqppppqppppoqqqqqoorronnoonnnmmnnooonnnppooooonnnoooonnnooooonnnnooooooooooooonnppooooooppqqppppppppppppoppqqqooppppppppooppooopppppppppppppppppoooooppppqppooqppoopqqppqppqqqqpppqqpqqppqqqpprqqpprppppoopoopppppoopoopppppppppppppppppoopppqqpppppqqqqqqqoqqpppppppqppqqqppqqrrqqqppqqqrrrnnnnnnnnnnnnnnnnnnnnnnnnnnoooooopppppppooooooooopoooopooppppnppooppppppppoopqqpppppppooqoooopoooopppqqoppoooooppoopoooopooooooooopoopppppooppoppooqppqqpooppooqppqqpppppoppqqqssoooopooooqppppopppppppppqqqqqpppppoopppoopoooopppppqqqqqrrqppppprrqqpqqqqqppppqqqqqrrqrrnnooopppppppooooooooppoopnnooopppponnooppoooooooooooppoopqqppooppppppppppoppppppppppppppoonnnooonnoonoonnnnnnnnnnnnooooopppnnnnoooooooonnoopppppopppppoopppppppqqpooppqpprrqpprronnooooooooonooooonnnnpppnnonnpppponnoopooppnoonnpoonnooooonnnnnpppooooooopppppppppoppqqpppppoqqqqqpppppppppppoooppppppppppqqpppppppqpppppqqqqqqqqqqppppppqrrqqpppqqqqqqqqrrrrrppppqqooooopppppqppoooppppppopppppoooopooppnppppppqppoopqqpppqqqqppppppqqqqrrrrrrrrqqsssnnnnnnnnnnnnnnnnnnnnnnnnoonooooooooooooooooopppppoooopooppooopppppppppoppqqpqqoopppppqqrpppppppoopooooooopppppooqqoooooooonnoooppoppoooopoooopqqpppppppqppppppppppppqqppoqqqqprrppppoppoopppoopnnppoppqqpppoopppppppppppppooppoppooqqpppqqqqqqqqqqqqqppqqpqqrrqqrqqrrqrroooppppoppoooooppoooooooonnoopnnnnnooooooonnpponnooopppppooppooopppppqqppopppppoopppqqqqpploooonnnooonnoonnnoonnonnoonoonnooooooppnnnnoooooopppppppoopqqoopoopppppppppqqqppqqqqqooonnoonnnpponnppoooppooooooppoonnqnnnnooooonnnooooonnooonnooooooooooppoppoopppoopppppqqpqqoooppoopppqqpppoopppppppqpppppppppppppppppqqpppppqqppppppqqqqpprqqqqpppqqqrrrrqqqrrrqqooppoppqqpppooppppppppooppopppppppppoppqqpoopppppooqqqpppppppqqpppppqqqqqqqpqqrrpppqqrnnnnnnnnnnnnnnnnnnnnnnnnoonrrooooooopponnoooppoopoooopppooooqppppopppppqqppppppppqqppooqoooopoorropppppppoooooppoooooppoooqqppppppppoooopqqooqpppppppppoppqqppppppppppoopqqqqpqqppppoppppooopppqqoopoopppppnnppqppppqppppppppppooooppqpppppppqqpqqqqqqqqqpqqqqqqqqqqqqsspppppoonppooooooonnoppooonnnnnnnnnoooooooonnoonnnppoooppoppooqqppppppqqpppppqqprrqqqppppppnnnppooooonnnooonnoooomoonnnnnooonnooooonnnnnnnoopoooopppooppppppooooppppppppppqqqqqqqooonnpppoooonoooooppnnpppoonnnoooooooooooonnnppooonnooooooonnnoooooooppopppppooppoopoorrqppooqqqppppppppppppqqpoooopoopppooppppppppppqqpppmmqqppppppppqqppqrrqqqrrrrqppppqqqqqrppppoopppooooooopppppoooppoopoopppoopppppppqooqqppqqqoopqqppqppooqppppqqqpprrqqqqqsqqqqsnnnnnnnnnnnnnnnnnnnnnnnnnnooooonooppppooooooooooooooopooppppppppppooooppppppppppqoopppproooopoooopoooooppqqoooppppoppoooppppooooopqqoopppppppqppqqpppqqrpppppppppppqppppoqqooprrooppppppppppppqooppqnnpppnnppoooppooqoopppooooppppppppppqqpqqqqqqqrrpqqppppprrqqpqqppqrrppoooooooooooopoonnoooooooommonnnnooooooonnnooooooonnnpppooppppppppppoopppooppppppppppqqqqnoooonooppooonnonnoooonnnoooooooonnooooooooooooooooooooooppopppppppqqppoqqpppqqppppprrooooonnonnooonnooonnoonoonnooooonnnooooooonnmnnnnonnoonnooooomoooooooppopppppooppppqqqqqoppooopppppppooppppppppqqpppppppqppppqppqqppppppprpppppppqqqqqqqrrqqqqqrqqqqprrqqqqqqqsooqqooqppqqppppppooppoppppoopppqqppppppppppoooooppoppqqpqqppppppppppqqqpppprrqppqqqppqqrnnnnnnnnnnnnnnnnnnnnnnnnoopoooooooooooopppponnppoooppopppppppppppppppppppooqppppppppppprppoopppoopoopppoonnpppppooooopppoooopppppoppppppppppppppppnpppppppppoopqqqqqqqpppqqppqqqppppoooppoppppoppoopppppoppppppqppppppppppppqqopppppppppqqpppppqqqqqqqqqqqqqpppppqqqqqrrnnooommooooooooooooooooopppoonoonnonnoonnooooooppooopppppooqqqqpppoopppppooooooppppqpprrppmmmooommoonppnnooooooonppoooooooooonnnnnnnppoppooooopppppppqpppppppppoopppppqqqppqqqqqnppooooooooomnnooonnnnnoonnooooonnoooooooonnnoonnonnnnoonppooommoopppoopoopppppppppqooqqpooooqppppppppppppppppppppppqqooqooppoppppppopppppqqppqqqppqppqqqqqppqqqqqqqrqqqqrqqqqrpppppppppoooqqqqoppqqpooppppppppppooppqqqppoppoopppppppppppppqqpppppqqpqqppqqqrrrrqqqqqsnnnnnnnnnnnnnnnnnnnnnnnnoopooppnoommoopppooooopppppoopqqppqqpppooopppppppppqoooopppooppqppppooooopoooooppnnpppoooooppoopppoopppqqpppoooopooqqqppppopprrpppppooqpppprqqppnppqqprrppqqppppppppoopooppoppqqpooqqpppqqoopppoopppqqpppooqqpqqppqqqpppppqqqqqqqqqqqqqqpssqqprrnnooonnnppppoopoooooppoooppnnonnooonnooooonnoooppppoppoooooppppqoopppppppqppooopppppooqqppoooppooooooooooooooooooooooooooonoonnooonnooooooooppppppppppppoooppppqqoppppqppqqpppqqooooonnonnoonnnnnonnnnpoonnooooonnnnnooonnnnoppooooooonnooooonoooooppppoppppqppoopppooqqpoopprppppppppppppqqqqpooppqoooooppppqqqppqqppppppqqpppppppqqqppqqqqqqqqppqqqrrqqqqqqqrppooppopppppooooppprrpppppqqpppqqpqqpppppppppppppppqqqqpppqqpppqqqrrqqqrrppqqqqqrrqqqqqsnnnnnnnnnnnnnnnnnnnnnnnnooooopppppoooopppppoppoopppoopoopppppppppppppppqqppqoooopqqpppproonnppppppoopppppoopppppppoooooorrpppoooooooppoopppqqpqqppppprrppppppppqqpppooqqqppooqrroooopppppqpppppooppqpppppoooopppppppqpppppppppprrqqppqppqqqqqqqqppppqqqqqpqqqqppqqqqqqttoooooppoooppoopoopponnoomoooonnnoooooooooonnoooooqqooopppoooopppppqqppppppoopppppqqpppqqpponnnnnnnoopooooooonnnnonnoonoooonoonnoooooooopppppoopppooqqooopppqqooppppppppqqppqqqqqpnnooppooooopoooooppoooooooonnoooonppooonnoonoooonooppoonoooopnnoooooppoooqqppppppppppqqoppoopppoooppppqqpppqqopppppoopppppppppppppppqqooqqqqqpppppqqqpprrqqqqqqqqqqqqqrrqrrqqrooppppoppppoooooppppppppppppoppooqoooopppppooooopppppppoppqqpqqqqqqqqqrqqqqppqqqqqqqqqqsnnnnnnnnnnnnnnnnnnnnnnnnoooppoooppoooopooppooooopoopppppoopppoopppppppoppppoqqpppooooppqppqqoppooooooonoonnoopooppoppoopooqqoppoooooqqpppoopppppooqppppqppppppqppqqppppppqqppqqqppqqoqqppppppppppqqpqqpppqqppppnppppoppooooopppqqppppoooppqppqqqqqpppqqqqrppqqqqqqqqqqqqppoooppoppppoooooooooonnnnnoopnnooooooonnnooooooonnoppppoppppqqqppoooqqpppooooppppppppppqqpnnppnoooonoonnpoooooonoooooooppooonnnoooooooppooqppppooopppppoooppppooqppooqqqppqpprrpnnlloopoooonoooonnnoooppooonnooooonnnnnooooooonnonnppoooppnnnnnoopooqqoooppoppoopppqqqqpoooooppqqqooppppppppppppqqpqqppppppppppooqqpppqqoppqqqppqqqqqqqpppppqqrrrqqrpppprrrqqroopppppqqpppqqppppppppppoooopooooqqqqqpoopppppooppppppppqqqqpppqqrrrqqqqqqqrrqrrqqrqqqqrnnnnnnnnnnnnnnnnnnnnnnnnoooppoooooppoopooooppppppoopppppppppoqqooqppppoppqqoppppqooqqooqppppooooopooppoppppppoppooopppppppppooooopppppqqoppppqpppppooqqpqqppqqpppppppppppppppqqqppooppppppppooppppppppqqpppppppoqqpppppppqppppoppooppqqqppqppppsqqqqqrrqqqppppqqqrrrrqrroonppnnooooonnnoooopnnnnnnnoonnnooooonnnnpoooonppnnpoooopoooopppqqppopppppppppppppppppqqpponnoooooooonnnnooonnoooppnnnoonnoooooonnoonnpoooooooppooooopppqqpooppppqppppqppqqqppqqonnoonnpnnoopoonnoooooonnooooooonnnnnoonppnnonnoonoonnoooppnnnppooopppppooppopppppppoopppqqqqpoopppppqqqqoqqpppoopppppppqppqqqpppppppqqooqppqqqqqqqrqqrrqqpqqqqpqqqqqqqqqrrrqqrooqqpppppppoppoopppppppprrppppprrnppoopqqppoppppppppppppqqppqqqqqpqqqqrqqppqqrqqppqqqrrsnnnnnnnnnnnnnnnnnnnnnnnnnnoooppnppppoopppnnpoopppppppoppppoooppoopppqqqppoopppppqppqqppqoooooooppnoooooooppooopppppoooooooqqooooopooppqqpppoooppppqqqqqoooqqpppqqpppppqqoqqqqqrrppoooooqqpppppoooppppppppoopppppqqpppppppppppppqqqqpppppqqqqqqqqpprrqrrpppppqqqqrqqrrqrr";var cv=document.getElementById("hc");var cx=cv.getContext("2d");var im=cx.createImageData(703,62);var d=im.data;for(var i=0;i<D.length;i++){var k=D.charCodeAt(i)-97;var c=P[k];d[i*4]=c[0];d[i*4+1]=c[1];d[i*4+2]=c[2];d[i*4+3]=255;}cx.putImageData(im,0,0);})();</script>
</body></html>
